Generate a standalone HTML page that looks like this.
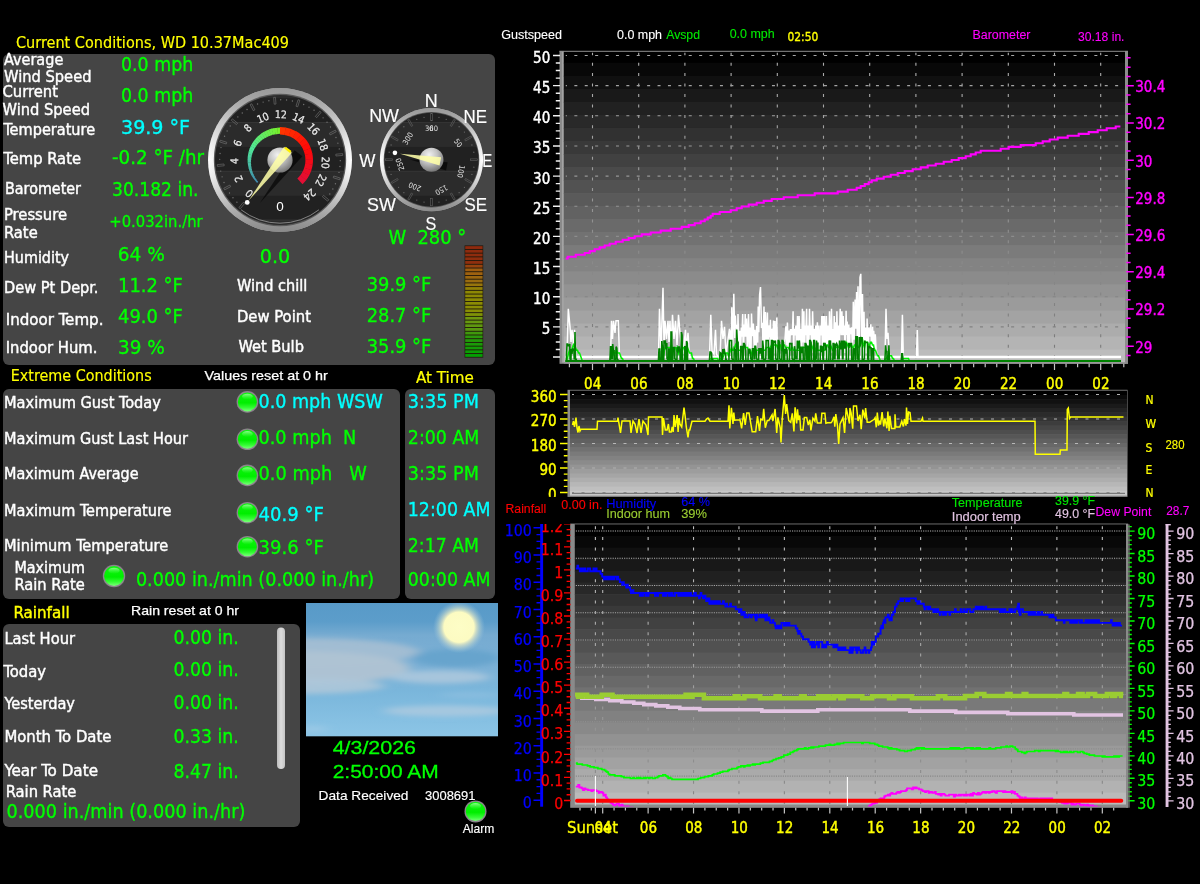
<!DOCTYPE html>
<html lang="en"><head><meta charset="utf-8"><title>Weather Display Live</title>
<style>
html,body{margin:0;padding:0;background:#000;}
body{width:1200px;height:884px;overflow:hidden;position:relative;font-family:"DejaVu Sans Condensed","DejaVu Sans","Liberation Sans",sans-serif;}
#app{position:absolute;left:0;top:0;width:1200px;height:884px;background:#000;}
.panel{position:absolute;background:#454545;border-radius:6px;}
svg{position:absolute;left:0;top:0;will-change:transform;}
.t{font-family:"DejaVu Sans Condensed","DejaVu Sans",sans-serif;}
.a{font-family:"Liberation Sans",sans-serif;}
</style></head><body><div id="app">
<div class="panel" style="left:3px;top:53.6px;width:492px;height:311.6px"></div>
<div class="panel" style="left:3px;top:389px;width:397px;height:209.5px"></div>
<div class="panel" style="left:405px;top:389px;width:90px;height:209.5px"></div>
<div class="panel" style="left:3px;top:624px;width:297px;height:203px"></div>
<svg width="1200" height="884" viewBox="0 0 1200 884">
<defs>
<linearGradient id="ledg" x1="0" y1="0" x2="0" y2="1"><stop offset="0" stop-color="#10f410"/><stop offset="0.55" stop-color="#00ee00"/><stop offset="0.8" stop-color="#34fb34"/><stop offset="1" stop-color="#7cff7c"/></linearGradient>
<linearGradient id="ledh" x1="0" y1="0" x2="0" y2="1"><stop offset="0" stop-color="#a8ffa8" stop-opacity="0.8"/><stop offset="1" stop-color="#50ff50" stop-opacity="0.05"/></linearGradient>
<linearGradient id="sky" x1="0" y1="0" x2="0" y2="1"><stop offset="0" stop-color="#589ac8"/><stop offset="0.14" stop-color="#5c9dca"/><stop offset="0.24" stop-color="#76abd1"/><stop offset="0.5" stop-color="#7cb1d6"/><stop offset="0.66" stop-color="#7ab6db"/><stop offset="0.9" stop-color="#87c1e3"/><stop offset="1" stop-color="#8cc5e6"/></linearGradient>
<radialGradient id="sun" cx="0.5" cy="0.5" r="0.5"><stop offset="0" stop-color="#fdfdc6"/><stop offset="0.58" stop-color="#fcfbc2"/><stop offset="0.68" stop-color="#dfe6c4" stop-opacity="0.8"/><stop offset="1" stop-color="#9cc4dc" stop-opacity="0"/></radialGradient>
<linearGradient id="scr" x1="0" y1="0" x2="1" y2="0"><stop offset="0" stop-color="#bdbdbd"/><stop offset="0.5" stop-color="#dcdcdc"/><stop offset="1" stop-color="#c4c4c4"/></linearGradient>
<filter id="blur3" x="-20%" y="-50%" width="140%" height="200%"><feGaussianBlur stdDeviation="6 2.4"/></filter>
<clipPath id="skyclip"><rect x="306" y="603" width="192" height="133.5"/></clipPath>
</defs>
<g id="leds">
<circle cx="247.4" cy="401.9" r="10.8" fill="#8c848c"/><circle cx="247.4" cy="401.9" r="9.5" fill="url(#ledg)"/><ellipse cx="247.4" cy="396.6" rx="5.4" ry="2.9" fill="url(#ledh)"/>
<circle cx="247.4" cy="439.3" r="10.8" fill="#8c848c"/><circle cx="247.4" cy="439.3" r="9.5" fill="url(#ledg)"/><ellipse cx="247.4" cy="434.0" rx="5.4" ry="2.9" fill="url(#ledh)"/>
<circle cx="247.4" cy="475.4" r="10.8" fill="#8c848c"/><circle cx="247.4" cy="475.4" r="9.5" fill="url(#ledg)"/><ellipse cx="247.4" cy="470.1" rx="5.4" ry="2.9" fill="url(#ledh)"/>
<circle cx="247.4" cy="512.7" r="10.8" fill="#8c848c"/><circle cx="247.4" cy="512.7" r="9.5" fill="url(#ledg)"/><ellipse cx="247.4" cy="507.4" rx="5.4" ry="2.9" fill="url(#ledh)"/>
<circle cx="247.4" cy="546.7" r="10.8" fill="#8c848c"/><circle cx="247.4" cy="546.7" r="9.5" fill="url(#ledg)"/><ellipse cx="247.4" cy="541.4" rx="5.4" ry="2.9" fill="url(#ledh)"/>
<circle cx="114" cy="576" r="11.2" fill="#8c848c"/><circle cx="114" cy="576" r="9.899999999999999" fill="url(#ledg)"/><ellipse cx="114" cy="570.7" rx="5.6" ry="3.0" fill="url(#ledh)"/>
<circle cx="475.5" cy="811.4" r="11" fill="#8c848c"/><circle cx="475.5" cy="811.4" r="9.7" fill="url(#ledg)"/><ellipse cx="475.5" cy="806.1" rx="5.5" ry="3.0" fill="url(#ledh)"/>
</g>
<g id="ledbar"><rect x="464.6" y="245.4" width="18.6" height="112.2" fill="#20180c"/>
<rect x="465.2" y="246.15" width="17.4" height="2.82" fill="#8e2a0e"/>
<rect x="465.2" y="249.87" width="17.4" height="2.82" fill="#8e2b0e"/>
<rect x="465.2" y="253.59" width="17.4" height="2.82" fill="#8e2c0e"/>
<rect x="465.2" y="257.31" width="17.4" height="2.82" fill="#8f2e0e"/>
<rect x="465.2" y="261.03" width="17.4" height="2.82" fill="#8f2f0e"/>
<rect x="465.2" y="264.75" width="17.4" height="2.82" fill="#97430e"/>
<rect x="465.2" y="268.47" width="17.4" height="2.82" fill="#9f5d10"/>
<rect x="465.2" y="272.19" width="17.4" height="2.82" fill="#9e6210"/>
<rect x="465.2" y="275.91" width="17.4" height="2.82" fill="#9c6710"/>
<rect x="465.2" y="279.63" width="17.4" height="2.82" fill="#9a6c10"/>
<rect x="465.2" y="283.35" width="17.4" height="2.82" fill="#97750d"/>
<rect x="465.2" y="287.07" width="17.4" height="2.82" fill="#918007"/>
<rect x="465.2" y="290.79" width="17.4" height="2.82" fill="#8d8804"/>
<rect x="465.2" y="294.51" width="17.4" height="2.82" fill="#8d8904"/>
<rect x="465.2" y="298.23" width="17.4" height="2.82" fill="#8c8b04"/>
<rect x="465.2" y="301.95" width="17.4" height="2.82" fill="#8b8c04"/>
<rect x="465.2" y="305.67" width="17.4" height="2.82" fill="#8a8e04"/>
<rect x="465.2" y="309.39" width="17.4" height="2.82" fill="#8a8f04"/>
<rect x="465.2" y="313.11" width="17.4" height="2.82" fill="#7f9208"/>
<rect x="465.2" y="316.83" width="17.4" height="2.82" fill="#6e970f"/>
<rect x="465.2" y="320.55" width="17.4" height="2.82" fill="#669810"/>
<rect x="465.2" y="324.27" width="17.4" height="2.82" fill="#5f9810"/>
<rect x="465.2" y="327.99" width="17.4" height="2.82" fill="#589810"/>
<rect x="465.2" y="331.71" width="17.4" height="2.82" fill="#3f980d"/>
<rect x="465.2" y="335.43" width="17.4" height="2.82" fill="#2a980b"/>
<rect x="465.2" y="339.15" width="17.4" height="2.82" fill="#22990a"/>
<rect x="465.2" y="342.87" width="17.4" height="2.82" fill="#1a9b08"/>
<rect x="465.2" y="346.59" width="17.4" height="2.82" fill="#139c07"/>
<rect x="465.2" y="350.31" width="17.4" height="2.82" fill="#0b9e05"/>
<rect x="465.2" y="354.03" width="17.4" height="2.82" fill="#04a004"/>
</g>
<rect x="277" y="627.5" width="8" height="141.5" rx="4" fill="url(#scr)"/>
<g id="sky-image" clip-path="url(#skyclip)">
<rect x="306" y="603" width="192.2" height="133.6" fill="url(#sky)"/>
<g filter="url(#blur3)">
<ellipse cx="300" cy="652" rx="120" ry="14" fill="#a3bed3" opacity="0.95"/>
<ellipse cx="295" cy="668" rx="115" ry="17" fill="#aec3d3" opacity="0.98"/>
<ellipse cx="295" cy="686" rx="90" ry="8" fill="#adc6d9" opacity="0.9"/>
<ellipse cx="456" cy="658" rx="44" ry="9" fill="#66a3cc" opacity="0.95"/>
<ellipse cx="440" cy="677" rx="50" ry="6.5" fill="#a9c6dc" opacity="0.95"/>
<ellipse cx="445" cy="711" rx="62" ry="5.5" fill="#a8c8df" opacity="0.95"/>
<ellipse cx="312" cy="729" rx="16" ry="3" fill="#9fcbe6" opacity="0.8"/>
<ellipse cx="470" cy="695" rx="30" ry="3" fill="#8fbfe0" opacity="0.7"/>
</g>
<circle cx="459" cy="627.2" r="26" fill="url(#sun)"/>
</g>
<defs>
<linearGradient id="bezel" x1="0" y1="0" x2="1" y2="0"><stop offset="0" stop-color="#ffffff"/><stop offset="0.12" stop-color="#e2e2e2"/><stop offset="0.5" stop-color="#8e8e8e"/><stop offset="0.88" stop-color="#e2e2e2"/><stop offset="1" stop-color="#ffffff"/></linearGradient>
<linearGradient id="bezel2" x1="0" y1="0" x2="0" y2="1"><stop offset="0" stop-color="#9a9a9a"/><stop offset="0.5" stop-color="#c8c8c8" stop-opacity="0"/><stop offset="1" stop-color="#8a8a8a"/></linearGradient>
<radialGradient id="knob" cx="0.4" cy="0.3" r="0.75"><stop offset="0" stop-color="#f2f2f2"/><stop offset="0.45" stop-color="#c4c4c4"/><stop offset="1" stop-color="#6e6e6e"/></radialGradient>
<pattern id="stripes" x="0" y="98.1" width="10" height="48.8" patternUnits="userSpaceOnUse"><rect width="10" height="24.4" fill="#212121"/><rect y="24.4" width="10" height="24.4" fill="#2b2b2b"/></pattern>
</defs>
<g id="windspeed-gauge">
<circle cx="280" cy="160" r="72" fill="url(#bezel)"/><circle cx="280" cy="160" r="72" fill="url(#bezel2)"/>
<circle cx="280" cy="160" r="66.2" fill="#5a5a5a"/><circle cx="280" cy="160" r="65" fill="url(#stripes)"/>
<rect x="240.85" y="202.18" width="1.8" height="6.8" fill="none" stroke="#707070" stroke-width="0.6" transform="rotate(-140.0 241.75 205.58)"/><circle cx="236.90" cy="202.17" r="0.7" fill="#727272"/><circle cx="232.97" cy="197.74" r="0.7" fill="#727272"/><circle cx="229.50" cy="192.95" r="0.7" fill="#727272"/><rect x="226.32" y="184.07" width="1.8" height="6.8" fill="none" stroke="#707070" stroke-width="0.6" transform="rotate(-117.5 227.22 187.47)"/><circle cx="224.04" cy="182.47" r="0.7" fill="#727272"/><circle cx="222.11" cy="176.87" r="0.7" fill="#727272"/><circle cx="220.73" cy="171.12" r="0.7" fill="#727272"/><rect x="219.83" y="161.79" width="1.8" height="6.8" fill="none" stroke="#707070" stroke-width="0.6" transform="rotate(-95.0 220.73 165.19)"/><circle cx="219.70" cy="159.34" r="0.7" fill="#727272"/><circle cx="220.06" cy="153.44" r="0.7" fill="#727272"/><circle cx="220.99" cy="147.59" r="0.7" fill="#727272"/><rect x="222.35" y="138.71" width="1.8" height="6.8" fill="none" stroke="#707070" stroke-width="0.6" transform="rotate(-72.5 223.25 142.11)"/><circle cx="224.55" cy="136.32" r="0.7" fill="#727272"/><circle cx="227.13" cy="131.00" r="0.7" fill="#727272"/><circle cx="230.23" cy="125.95" r="0.7" fill="#727272"/><rect x="233.52" y="118.35" width="1.8" height="6.8" fill="none" stroke="#707070" stroke-width="0.6" transform="rotate(-50.0 234.42 121.75)"/><circle cx="237.83" cy="116.90" r="0.7" fill="#727272"/><circle cx="242.26" cy="112.97" r="0.7" fill="#727272"/><circle cx="247.05" cy="109.50" r="0.7" fill="#727272"/><rect x="251.63" y="103.82" width="1.8" height="6.8" fill="none" stroke="#707070" stroke-width="0.6" transform="rotate(-27.5 252.53 107.22)"/><circle cx="257.53" cy="104.04" r="0.7" fill="#727272"/><circle cx="263.13" cy="102.11" r="0.7" fill="#727272"/><circle cx="268.88" cy="100.73" r="0.7" fill="#727272"/><rect x="273.91" y="97.33" width="1.8" height="6.8" fill="none" stroke="#707070" stroke-width="0.6" transform="rotate(-5.0 274.81 100.73)"/><circle cx="280.66" cy="99.70" r="0.7" fill="#727272"/><circle cx="286.56" cy="100.06" r="0.7" fill="#727272"/><circle cx="292.41" cy="100.99" r="0.7" fill="#727272"/><rect x="296.99" y="99.85" width="1.8" height="6.8" fill="none" stroke="#707070" stroke-width="0.6" transform="rotate(17.5 297.89 103.25)"/><circle cx="303.68" cy="104.55" r="0.7" fill="#727272"/><circle cx="309.00" cy="107.13" r="0.7" fill="#727272"/><circle cx="314.05" cy="110.23" r="0.7" fill="#727272"/><rect x="317.35" y="111.02" width="1.8" height="6.8" fill="none" stroke="#707070" stroke-width="0.6" transform="rotate(40.0 318.25 114.42)"/><circle cx="323.10" cy="117.83" r="0.7" fill="#727272"/><circle cx="327.03" cy="122.26" r="0.7" fill="#727272"/><circle cx="330.50" cy="127.05" r="0.7" fill="#727272"/><rect x="331.88" y="129.13" width="1.8" height="6.8" fill="none" stroke="#707070" stroke-width="0.6" transform="rotate(62.5 332.78 132.53)"/><circle cx="335.96" cy="137.53" r="0.7" fill="#727272"/><circle cx="337.89" cy="143.13" r="0.7" fill="#727272"/><circle cx="339.27" cy="148.88" r="0.7" fill="#727272"/><rect x="338.37" y="151.41" width="1.8" height="6.8" fill="none" stroke="#707070" stroke-width="0.6" transform="rotate(85.0 339.27 154.81)"/><circle cx="340.30" cy="160.66" r="0.7" fill="#727272"/><circle cx="339.94" cy="166.56" r="0.7" fill="#727272"/><circle cx="339.01" cy="172.41" r="0.7" fill="#727272"/><rect x="335.85" y="174.49" width="1.8" height="6.8" fill="none" stroke="#707070" stroke-width="0.6" transform="rotate(107.5 336.75 177.89)"/><circle cx="335.45" cy="183.68" r="0.7" fill="#727272"/><circle cx="332.87" cy="189.00" r="0.7" fill="#727272"/><circle cx="329.77" cy="194.05" r="0.7" fill="#727272"/><rect x="324.68" y="194.85" width="1.8" height="6.8" fill="none" stroke="#707070" stroke-width="0.6" transform="rotate(130.0 325.58 198.25)"/>
<text class="t" x="251.71" y="190.77" font-size="10.6" fill="#ececec" stroke="#ececec" stroke-width="0.2" text-anchor="middle" transform="rotate(-137.4 251.71 190.77)">0</text><text class="t" x="241.91" y="177.21" font-size="10.6" fill="#ececec" stroke="#ececec" stroke-width="0.2" text-anchor="middle" transform="rotate(-114.3 241.91 177.21)">2</text><text class="t" x="238.21" y="160.90" font-size="10.6" fill="#ececec" stroke="#ececec" stroke-width="0.2" text-anchor="middle" transform="rotate(-91.2 238.21 160.90)">4</text><text class="t" x="241.20" y="144.45" font-size="10.6" fill="#ececec" stroke="#ececec" stroke-width="0.2" text-anchor="middle" transform="rotate(-68.2 241.20 144.45)">6</text><text class="t" x="250.40" y="130.48" font-size="10.6" fill="#ececec" stroke="#ececec" stroke-width="0.2" text-anchor="middle" transform="rotate(-45.1 250.40 130.48)">8</text><text class="t" x="264.34" y="121.24" font-size="10.6" fill="#ececec" stroke="#ececec" stroke-width="0.2" text-anchor="middle" transform="rotate(-22.0 264.34 121.24)">10</text><text class="t" x="280.79" y="118.21" font-size="10.6" fill="#ececec" stroke="#ececec" stroke-width="0.2" text-anchor="middle" transform="rotate(1.1 280.79 118.21)">12</text><text class="t" x="297.11" y="121.86" font-size="10.6" fill="#ececec" stroke="#ececec" stroke-width="0.2" text-anchor="middle" transform="rotate(24.2 297.11 121.86)">14</text><text class="t" x="310.69" y="131.62" font-size="10.6" fill="#ececec" stroke="#ececec" stroke-width="0.2" text-anchor="middle" transform="rotate(47.2 310.69 131.62)">16</text><text class="t" x="319.36" y="145.92" font-size="10.6" fill="#ececec" stroke="#ececec" stroke-width="0.2" text-anchor="middle" transform="rotate(70.3 319.36 145.92)">18</text><text class="t" x="321.73" y="162.48" font-size="10.6" fill="#ececec" stroke="#ececec" stroke-width="0.2" text-anchor="middle" transform="rotate(93.4 321.73 162.48)">20</text><text class="t" x="317.41" y="178.64" font-size="10.6" fill="#ececec" stroke="#ececec" stroke-width="0.2" text-anchor="middle" transform="rotate(116.5 317.41 178.64)">22</text><text class="t" x="307.11" y="191.81" font-size="10.6" fill="#ececec" stroke="#ececec" stroke-width="0.2" text-anchor="middle" transform="rotate(139.6 307.11 191.81)">24</text>
<path d="M257.69,182.31A31.546759259259257,31.546759259259257 0 0 1 255.62,180.02" stroke="#418caf" stroke-width="1.71" fill="none"/><path d="M255.92,180.21A31.440277777777776,31.440277777777776 0 0 1 254.06,177.76" stroke="#4293ad" stroke-width="1.92" fill="none"/><path d="M254.33,177.97A31.333796296296295,31.333796296296295 0 0 1 252.70,175.38" stroke="#439aac" stroke-width="2.13" fill="none"/><path d="M252.96,175.61A31.227314814814815,31.227314814814815 0 0 1 251.56,172.90" stroke="#44a1aa" stroke-width="2.35" fill="none"/><path d="M251.79,173.15A31.120833333333334,31.120833333333334 0 0 1 250.65,170.34" stroke="#45a8a8" stroke-width="2.56" fill="none"/><path d="M250.86,170.61A31.01435185185185,31.01435185185185 0 0 1 249.96,167.71" stroke="#47afa6" stroke-width="2.77" fill="none"/><path d="M250.15,168.00A30.907870370370368,30.907870370370368 0 0 1 249.51,165.05" stroke="#48b6a4" stroke-width="2.98" fill="none"/><path d="M249.67,165.35A30.801388888888887,30.801388888888887 0 0 1 249.29,162.36" stroke="#49bda3" stroke-width="3.20" fill="none"/><path d="M249.42,162.68A30.694907407407406,30.694907407407406 0 0 1 249.31,159.68" stroke="#4ac4a1" stroke-width="3.41" fill="none"/><path d="M249.41,160.00A30.588425925925925,30.588425925925925 0 0 1 249.56,157.02" stroke="#4bcc9f" stroke-width="3.62" fill="none"/><path d="M249.63,157.34A30.481944444444444,30.481944444444444 0 0 1 250.04,154.39" stroke="#4cd39d" stroke-width="3.84" fill="none"/><path d="M250.09,154.73A30.375462962962963,30.375462962962963 0 0 1 250.74,151.83" stroke="#4eda9c" stroke-width="4.05" fill="none"/><path d="M250.76,152.17A30.26898148148148,30.26898148148148 0 0 1 251.67,149.35" stroke="#4fe19a" stroke-width="4.26" fill="none"/><path d="M251.66,149.68A30.162499999999998,30.162499999999998 0 0 1 252.80,146.97" stroke="#50e898" stroke-width="4.47" fill="none"/><path d="M252.76,147.30A30.056018518518517,30.056018518518517 0 0 1 254.13,144.70" stroke="#53e990" stroke-width="4.69" fill="none"/><path d="M254.06,145.03A29.949537037037036,29.949537037037036 0 0 1 255.65,142.57" stroke="#56e987" stroke-width="4.90" fill="none"/><path d="M255.55,142.88A29.843055555555555,29.843055555555555 0 0 1 257.34,140.58" stroke="#59ea7f" stroke-width="5.11" fill="none"/><path d="M257.22,140.89A29.736574074074074,29.736574074074074 0 0 1 259.19,138.75" stroke="#5cea77" stroke-width="5.33" fill="none"/><path d="M259.05,139.05A29.63009259259259,29.63009259259259 0 0 1 261.19,137.10" stroke="#5feb6f" stroke-width="5.54" fill="none"/><path d="M261.02,137.38A29.52361111111111,29.52361111111111 0 0 1 263.32,135.64" stroke="#62ec66" stroke-width="5.75" fill="none"/><path d="M263.13,135.90A29.417129629629628,29.417129629629628 0 0 1 265.56,134.37" stroke="#65ec5e" stroke-width="5.97" fill="none"/><path d="M265.34,134.62A29.310648148148147,29.310648148148147 0 0 1 267.89,133.31" stroke="#68ed56" stroke-width="6.18" fill="none"/><path d="M267.62,133.45A29.299999999999997,29.299999999999997 0 0 1 270.27,132.36" stroke="#6bed4d" stroke-width="6.20" fill="none"/><path d="M269.98,132.47A29.299999999999997,29.299999999999997 0 0 1 272.71,131.62" stroke="#6eee45" stroke-width="6.20" fill="none"/><path d="M272.42,131.70A29.299999999999997,29.299999999999997 0 0 1 275.21,131.09" stroke="#71ef3d" stroke-width="6.20" fill="none"/><path d="M274.91,131.15A29.299999999999997,29.299999999999997 0 0 1 277.75,130.79" stroke="#74ef34" stroke-width="6.20" fill="none"/><path d="M277.45,130.81A29.299999999999997,29.299999999999997 0 0 1 280.31,130.70" stroke="#77f02c" stroke-width="6.20" fill="none"/>
<path d="M280.00,130.80A29.2,29.2 0 0 1 285.26,131.28" stroke="#ff3501" stroke-width="7.6" fill="none"/><path d="M284.96,131.22A29.2,29.2 0 0 1 290.07,132.59" stroke="#ff2e02" stroke-width="7.6" fill="none"/><path d="M289.78,132.49A29.2,29.2 0 0 1 294.58,134.70" stroke="#ff2703" stroke-width="7.6" fill="none"/><path d="M294.32,134.55A29.2,29.2 0 0 1 298.67,137.55" stroke="#ff2004" stroke-width="7.6" fill="none"/><path d="M298.43,137.35A29.2,29.2 0 0 1 302.21,141.05" stroke="#ff1905" stroke-width="7.6" fill="none"/><path d="M302.01,140.82A29.2,29.2 0 0 1 305.11,145.10" stroke="#ff1206" stroke-width="7.6" fill="none"/><path d="M304.95,144.84A29.2,29.2 0 0 1 307.28,149.58" stroke="#ff0b07" stroke-width="7.6" fill="none"/><path d="M307.17,149.30A29.2,29.2 0 0 1 308.65,154.37" stroke="#fd090b" stroke-width="7.6" fill="none"/><path d="M308.59,154.07A29.2,29.2 0 0 1 309.19,159.32" stroke="#f80a12" stroke-width="7.6" fill="none"/><path d="M309.18,159.02A29.2,29.2 0 0 1 308.88,164.29" stroke="#f40b19" stroke-width="7.6" fill="none"/><path d="M308.93,163.99A29.2,29.2 0 0 1 307.73,169.14" stroke="#f00c20" stroke-width="7.6" fill="none"/><path d="M307.83,168.85A29.2,29.2 0 0 1 305.78,173.72" stroke="#eb0d27" stroke-width="7.6" fill="none"/><path d="M305.92,173.45A29.2,29.2 0 0 1 303.07,177.90" stroke="#e70e2e" stroke-width="7.6" fill="none"/><path d="M303.25,177.66A29.2,29.2 0 0 1 299.91,181.36" stroke="#e20f35" stroke-width="7.6" fill="none"/>
<path d="M318.91,209.80A63.2,63.2 0 0 1 241.09,209.80" stroke="#8c8c8c" stroke-width="0.9" fill="none"/>
<polygon points="302.41,156.27 259.92,203.06 294.49,150.16" fill="#000" opacity="0.62"/>
<circle cx="280" cy="160" r="12.6" fill="url(#knob)"/>
<polygon points="291.91,152.77 248.51,200.75 283.99,146.66" fill="#ffffa8" opacity="0.86"/>
<rect x="284.35" y="148.61" width="7.2" height="2.4" fill="#fff000" transform="rotate(37.7 287.95 149.71)"/>
<circle cx="247.22" cy="202.41" r="2.4" fill="#fff"/>
<text class="a" x="280" y="211.2" font-size="13.5" fill="#fff" text-anchor="middle">0</text>
</g>
<g id="compass">
<circle cx="431.5" cy="159.7" r="51.6" fill="url(#bezel)"/><circle cx="431.5" cy="159.7" r="51.6" fill="url(#bezel2)"/>
<circle cx="431.5" cy="159.7" r="47.8" fill="#555"/><circle cx="431.5" cy="159.7" r="47" fill="url(#stripes)"/>
<rect x="430.70" y="113.60" width="1.6" height="7.2" fill="none" stroke="#606060" stroke-width="0.6" transform="rotate(0 431.50 117.20)"/><circle cx="438.97" cy="117.35" r="0.65" fill="#6a6a6a"/><circle cx="446.21" cy="119.29" r="0.65" fill="#6a6a6a"/><rect x="451.95" y="119.29" width="1.6" height="7.2" fill="none" stroke="#606060" stroke-width="0.6" transform="rotate(30 452.75 122.89)"/><circle cx="459.14" cy="126.76" r="0.65" fill="#6a6a6a"/><circle cx="464.44" cy="132.06" r="0.65" fill="#6a6a6a"/><rect x="467.51" y="134.85" width="1.6" height="7.2" fill="none" stroke="#606060" stroke-width="0.6" transform="rotate(60 468.31 138.45)"/><circle cx="471.91" cy="144.99" r="0.65" fill="#6a6a6a"/><circle cx="473.85" cy="152.23" r="0.65" fill="#6a6a6a"/><rect x="473.20" y="156.10" width="1.6" height="7.2" fill="none" stroke="#606060" stroke-width="0.6" transform="rotate(90 474.00 159.70)"/><circle cx="473.85" cy="167.17" r="0.65" fill="#6a6a6a"/><circle cx="471.91" cy="174.41" r="0.65" fill="#6a6a6a"/><rect x="467.51" y="177.35" width="1.6" height="7.2" fill="none" stroke="#606060" stroke-width="0.6" transform="rotate(120 468.31 180.95)"/><circle cx="464.44" cy="187.34" r="0.65" fill="#6a6a6a"/><circle cx="459.14" cy="192.64" r="0.65" fill="#6a6a6a"/><rect x="451.95" y="192.91" width="1.6" height="7.2" fill="none" stroke="#606060" stroke-width="0.6" transform="rotate(150 452.75 196.51)"/><circle cx="446.21" cy="200.11" r="0.65" fill="#6a6a6a"/><circle cx="438.97" cy="202.05" r="0.65" fill="#6a6a6a"/><rect x="430.70" y="198.60" width="1.6" height="7.2" fill="none" stroke="#606060" stroke-width="0.6" transform="rotate(180 431.50 202.20)"/><circle cx="424.03" cy="202.05" r="0.65" fill="#6a6a6a"/><circle cx="416.79" cy="200.11" r="0.65" fill="#6a6a6a"/><rect x="409.45" y="192.91" width="1.6" height="7.2" fill="none" stroke="#606060" stroke-width="0.6" transform="rotate(210 410.25 196.51)"/><circle cx="403.86" cy="192.64" r="0.65" fill="#6a6a6a"/><circle cx="398.56" cy="187.34" r="0.65" fill="#6a6a6a"/><rect x="393.89" y="177.35" width="1.6" height="7.2" fill="none" stroke="#606060" stroke-width="0.6" transform="rotate(240 394.69 180.95)"/><circle cx="391.09" cy="174.41" r="0.65" fill="#6a6a6a"/><circle cx="389.15" cy="167.17" r="0.65" fill="#6a6a6a"/><rect x="388.20" y="156.10" width="1.6" height="7.2" fill="none" stroke="#606060" stroke-width="0.6" transform="rotate(270 389.00 159.70)"/><circle cx="389.15" cy="152.23" r="0.65" fill="#6a6a6a"/><circle cx="391.09" cy="144.99" r="0.65" fill="#6a6a6a"/><rect x="393.89" y="134.85" width="1.6" height="7.2" fill="none" stroke="#606060" stroke-width="0.6" transform="rotate(300 394.69 138.45)"/><circle cx="398.56" cy="132.06" r="0.65" fill="#6a6a6a"/><circle cx="403.86" cy="126.76" r="0.65" fill="#6a6a6a"/><rect x="409.45" y="119.29" width="1.6" height="7.2" fill="none" stroke="#606060" stroke-width="0.6" transform="rotate(330 410.25 122.89)"/><circle cx="416.79" cy="119.29" r="0.65" fill="#6a6a6a"/><circle cx="424.03" cy="117.35" r="0.65" fill="#6a6a6a"/>
<text class="t" x="431.50" y="131.10" font-size="7.5" fill="#e0e0e0" text-anchor="middle" transform="rotate(0 431.50 131.10)">0</text><text class="t" x="431.50" y="131.10" font-size="7.5" fill="#e0e0e0" text-anchor="middle" transform="rotate(0 431.50 131.10)">360</text><text class="t" x="453.41" y="141.32" font-size="7.5" fill="#e0e0e0" text-anchor="start" transform="rotate(51 453.41 141.32)">50</text><text class="t" x="459.67" y="164.67" font-size="7.5" fill="#e0e0e0" text-anchor="start" transform="rotate(101 459.67 164.67)">100</text><text class="t" x="445.80" y="184.47" font-size="7.5" fill="#e0e0e0" text-anchor="start" transform="rotate(151 445.80 184.47)">150</text><text class="t" x="421.72" y="186.58" font-size="7.5" fill="#e0e0e0" text-anchor="start" transform="rotate(201 421.72 186.58)">200</text><text class="t" x="404.62" y="169.48" font-size="7.5" fill="#e0e0e0" text-anchor="start" transform="rotate(251 404.62 169.48)">250</text><text class="t" x="406.73" y="145.40" font-size="7.5" fill="#e0e0e0" text-anchor="start" transform="rotate(301 406.73 145.40)">300</text>
<polygon points="446.07,170.58 408.99,159.37 447.61,162.32" fill="#000" opacity="0.62"/>
<circle cx="431.5" cy="159.7" r="12" fill="url(#knob)"/>
<polygon points="439.57,165.48 400.05,153.81 441.12,157.23" fill="#ffffa8" opacity="0.88"/>
<circle cx="394.93" cy="152.86" r="2.3" fill="#fff"/>
</g>
<defs>
<linearGradient id="gridv1" gradientUnits="userSpaceOnUse" x1="0" y1="52" x2="0" y2="362"><stop offset="0" stop-color="#b0b0b0"/><stop offset="1" stop-color="#787878"/></linearGradient>
<linearGradient id="gridv3" gradientUnits="userSpaceOnUse" x1="0" y1="524" x2="0" y2="804"><stop offset="0" stop-color="#c0c0c0"/><stop offset="1" stop-color="#848484"/></linearGradient>
</defs>
<g id="chart-wind-baro">
<rect x="559.5" y="50.8" width="568.5" height="313" fill="#8a8a8a"/><rect x="562" y="51.6" width="2" height="311" fill="#a4a4a4"/>
<rect x="563.75" y="49.80" width="561.25" height="13.53" fill="#000000"/><rect x="563.75" y="62.83" width="561.25" height="13.53" fill="#080808"/><rect x="563.75" y="75.86" width="561.25" height="13.53" fill="#101010"/><rect x="563.75" y="88.89" width="561.25" height="13.53" fill="#191919"/><rect x="563.75" y="101.92" width="561.25" height="13.53" fill="#212121"/><rect x="563.75" y="114.95" width="561.25" height="13.53" fill="#292929"/><rect x="563.75" y="127.97" width="561.25" height="13.53" fill="#313131"/><rect x="563.75" y="141.00" width="561.25" height="13.53" fill="#393939"/><rect x="563.75" y="154.03" width="561.25" height="13.53" fill="#414141"/><rect x="563.75" y="167.06" width="561.25" height="13.53" fill="#4a4a4a"/><rect x="563.75" y="180.09" width="561.25" height="13.53" fill="#525252"/><rect x="563.75" y="193.12" width="561.25" height="13.53" fill="#5a5a5a"/><rect x="563.75" y="206.15" width="561.25" height="13.53" fill="#626262"/><rect x="563.75" y="219.18" width="561.25" height="13.53" fill="#6a6a6a"/><rect x="563.75" y="232.21" width="561.25" height="13.53" fill="#727272"/><rect x="563.75" y="245.24" width="561.25" height="13.53" fill="#7b7b7b"/><rect x="563.75" y="258.27" width="561.25" height="13.53" fill="#838383"/><rect x="563.75" y="271.30" width="561.25" height="13.53" fill="#8b8b8b"/><rect x="563.75" y="284.32" width="561.25" height="13.53" fill="#939393"/><rect x="563.75" y="297.35" width="561.25" height="13.53" fill="#9b9b9b"/><rect x="563.75" y="310.38" width="561.25" height="13.53" fill="#a3a3a3"/><rect x="563.75" y="323.41" width="561.25" height="13.53" fill="#acacac"/><rect x="563.75" y="336.44" width="561.25" height="13.53" fill="#b4b4b4"/><rect x="563.75" y="349.47" width="561.25" height="13.53" fill="#bcbcbc"/>
<rect x="559.5" y="49" width="570" height="1.8" fill="#000"/><rect x="559.5" y="50.8" width="568.5" height="1" fill="#8f8f8f"/>
<rect x="1125" y="51.8" width="3" height="312" fill="#8c8c8c"/><rect x="563.75" y="362.2" width="562" height="1.6" fill="#909090"/>
<path d="M592.50,52.8V362.5M638.70,52.8V362.5M684.90,52.8V362.5M731.10,52.8V362.5M777.30,52.8V362.5M823.50,52.8V362.5M869.70,52.8V362.5M915.90,52.8V362.5M962.10,52.8V362.5M1008.30,52.8V362.5M1054.50,52.8V362.5M1100.70,52.8V362.5" stroke="url(#gridv1)" stroke-width="1.1" stroke-dasharray="3 7.45" stroke-dashoffset="0.6" fill="none"/>
<path d="M565.75,326.85H1125" stroke="#818181" stroke-width="1.1" stroke-dasharray="3 7.4" stroke-dashoffset="1.8" fill="none"/><path d="M565.75,296.70H1125" stroke="#858585" stroke-width="1.1" stroke-dasharray="3 7.4" stroke-dashoffset="1.8" fill="none"/><path d="M565.75,266.55H1125" stroke="#898989" stroke-width="1.1" stroke-dasharray="3 7.4" stroke-dashoffset="1.8" fill="none"/><path d="M565.75,236.40H1125" stroke="#8d8d8d" stroke-width="1.1" stroke-dasharray="3 7.4" stroke-dashoffset="1.8" fill="none"/><path d="M565.75,206.25H1125" stroke="#929292" stroke-width="1.1" stroke-dasharray="3 7.4" stroke-dashoffset="1.8" fill="none"/><path d="M565.75,176.10H1125" stroke="#969696" stroke-width="1.1" stroke-dasharray="3 7.4" stroke-dashoffset="1.8" fill="none"/><path d="M565.75,145.95H1125" stroke="#9a9a9a" stroke-width="1.1" stroke-dasharray="3 7.4" stroke-dashoffset="1.8" fill="none"/><path d="M565.75,115.80H1125" stroke="#9e9e9e" stroke-width="1.1" stroke-dasharray="3 7.4" stroke-dashoffset="1.8" fill="none"/><path d="M565.75,85.65H1125" stroke="#a3a3a3" stroke-width="1.1" stroke-dasharray="3 7.4" stroke-dashoffset="1.8" fill="none"/><path d="M565.75,55.50H1125" stroke="#a7a7a7" stroke-width="1.1" stroke-dasharray="3 7.4" stroke-dashoffset="1.8" fill="none"/>
<path d="M553,357.00H560M555.8,349.46H560M555.8,341.93H560M555.8,334.39H560M553,326.85H560M555.8,319.31H560M555.8,311.77H560M555.8,304.24H560M553,296.70H560M555.8,289.16H560M555.8,281.62H560M555.8,274.09H560M553,266.55H560M555.8,259.01H560M555.8,251.47H560M555.8,243.94H560M553,236.40H560M555.8,228.86H560M555.8,221.32H560M555.8,213.79H560M553,206.25H560M555.8,198.71H560M555.8,191.17H560M555.8,183.64H560M553,176.10H560M555.8,168.56H560M555.8,161.03H560M555.8,153.49H560M553,145.95H560M555.8,138.41H560M555.8,130.88H560M555.8,123.34H560M553,115.80H560M555.8,108.26H560M555.8,100.72H560M555.8,93.19H560M553,85.65H560M555.8,78.11H560M555.8,70.57H560M555.8,63.04H560M553,55.50H560" stroke="#f0f0f0" stroke-width="1.4" fill="none"/>
<text class="t" x="550.3" y="334.2" font-size="15.8" fill="#fff" stroke="#fff" stroke-width="0.42" text-anchor="end" textLength="8.6" lengthAdjust="spacingAndGlyphs">5</text>
<text class="t" x="550.3" y="304.1" font-size="15.8" fill="#fff" stroke="#fff" stroke-width="0.42" text-anchor="end" textLength="17.2" lengthAdjust="spacingAndGlyphs">10</text>
<text class="t" x="550.3" y="273.9" font-size="15.8" fill="#fff" stroke="#fff" stroke-width="0.42" text-anchor="end" textLength="17.2" lengthAdjust="spacingAndGlyphs">15</text>
<text class="t" x="550.3" y="243.8" font-size="15.8" fill="#fff" stroke="#fff" stroke-width="0.42" text-anchor="end" textLength="17.2" lengthAdjust="spacingAndGlyphs">20</text>
<text class="t" x="550.3" y="213.7" font-size="15.8" fill="#fff" stroke="#fff" stroke-width="0.42" text-anchor="end" textLength="17.2" lengthAdjust="spacingAndGlyphs">25</text>
<text class="t" x="550.3" y="183.5" font-size="15.8" fill="#fff" stroke="#fff" stroke-width="0.42" text-anchor="end" textLength="17.2" lengthAdjust="spacingAndGlyphs">30</text>
<text class="t" x="550.3" y="153.3" font-size="15.8" fill="#fff" stroke="#fff" stroke-width="0.42" text-anchor="end" textLength="17.2" lengthAdjust="spacingAndGlyphs">35</text>
<text class="t" x="550.3" y="123.2" font-size="15.8" fill="#fff" stroke="#fff" stroke-width="0.42" text-anchor="end" textLength="17.2" lengthAdjust="spacingAndGlyphs">40</text>
<text class="t" x="550.3" y="93.0" font-size="15.8" fill="#fff" stroke="#fff" stroke-width="0.42" text-anchor="end" textLength="17.2" lengthAdjust="spacingAndGlyphs">45</text>
<text class="t" x="550.3" y="62.9" font-size="15.8" fill="#fff" stroke="#fff" stroke-width="0.42" text-anchor="end" textLength="17.2" lengthAdjust="spacingAndGlyphs">50</text>
<path d="M1126.3,355.55H1130.6M1126.3,346.25H1133.8M1126.3,336.95H1130.6M1126.3,327.64H1130.6M1126.3,318.34H1130.6M1126.3,309.04H1133.8M1126.3,299.73H1130.6M1126.3,290.43H1130.6M1126.3,281.13H1130.6M1126.3,271.82H1133.8M1126.3,262.52H1130.6M1126.3,253.22H1130.6M1126.3,243.91H1130.6M1126.3,234.61H1133.8M1126.3,225.30H1130.6M1126.3,216.00H1130.6M1126.3,206.70H1130.6M1126.3,197.39H1133.8M1126.3,188.09H1130.6M1126.3,178.79H1130.6M1126.3,169.48H1130.6M1126.3,160.18H1133.8M1126.3,150.88H1130.6M1126.3,141.57H1130.6M1126.3,132.27H1130.6M1126.3,122.97H1133.8M1126.3,113.66H1130.6M1126.3,104.36H1130.6M1126.3,95.06H1130.6M1126.3,85.75H1133.8M1126.3,76.45H1130.6M1126.3,67.14H1130.6M1126.3,57.84H1130.6" stroke="#ff00ff" stroke-width="1.5" fill="none"/>
<text class="t" x="1135.2" y="352.6" font-size="15.8" fill="#ff00ff" stroke="#ff00ff" stroke-width="0.42" text-anchor="start" textLength="17.2" lengthAdjust="spacingAndGlyphs">29</text>
<text class="t" x="1135.2" y="315.4" font-size="15.8" fill="#ff00ff" stroke="#ff00ff" stroke-width="0.42" text-anchor="start" textLength="30.1" lengthAdjust="spacingAndGlyphs">29.2</text>
<text class="t" x="1135.2" y="278.2" font-size="15.8" fill="#ff00ff" stroke="#ff00ff" stroke-width="0.42" text-anchor="start" textLength="30.1" lengthAdjust="spacingAndGlyphs">29.4</text>
<text class="t" x="1135.2" y="241.0" font-size="15.8" fill="#ff00ff" stroke="#ff00ff" stroke-width="0.42" text-anchor="start" textLength="30.1" lengthAdjust="spacingAndGlyphs">29.6</text>
<text class="t" x="1135.2" y="203.8" font-size="15.8" fill="#ff00ff" stroke="#ff00ff" stroke-width="0.42" text-anchor="start" textLength="30.1" lengthAdjust="spacingAndGlyphs">29.8</text>
<text class="t" x="1135.2" y="166.6" font-size="15.8" fill="#ff00ff" stroke="#ff00ff" stroke-width="0.42" text-anchor="start" textLength="17.2" lengthAdjust="spacingAndGlyphs">30</text>
<text class="t" x="1135.2" y="129.4" font-size="15.8" fill="#ff00ff" stroke="#ff00ff" stroke-width="0.42" text-anchor="start" textLength="30.1" lengthAdjust="spacingAndGlyphs">30.2</text>
<text class="t" x="1135.2" y="92.2" font-size="15.8" fill="#ff00ff" stroke="#ff00ff" stroke-width="0.42" text-anchor="start" textLength="30.1" lengthAdjust="spacingAndGlyphs">30.4</text>
<path d="M569.40,363.8V367.2M580.95,363.8V367.2M592.50,363.8V370M604.05,363.8V367.2M615.60,363.8V367.2M627.15,363.8V367.2M638.70,363.8V370M650.25,363.8V367.2M661.80,363.8V367.2M673.35,363.8V367.2M684.90,363.8V370M696.45,363.8V367.2M708.00,363.8V367.2M719.55,363.8V367.2M731.10,363.8V370M742.65,363.8V367.2M754.20,363.8V367.2M765.75,363.8V367.2M777.30,363.8V370M788.85,363.8V367.2M800.40,363.8V367.2M811.95,363.8V367.2M823.50,363.8V370M835.05,363.8V367.2M846.60,363.8V367.2M858.15,363.8V367.2M869.70,363.8V370M881.25,363.8V367.2M892.80,363.8V367.2M904.35,363.8V367.2M915.90,363.8V370M927.45,363.8V367.2M939.00,363.8V367.2M950.55,363.8V367.2M962.10,363.8V370M973.65,363.8V367.2M985.20,363.8V367.2M996.75,363.8V367.2M1008.30,363.8V370M1019.85,363.8V367.2M1031.40,363.8V367.2M1042.95,363.8V367.2M1054.50,363.8V370M1066.05,363.8V367.2M1077.60,363.8V367.2M1089.15,363.8V367.2M1100.70,363.8V370M1112.25,363.8V367.2M1123.80,363.8V367.2" stroke="#c4c4c4" stroke-width="1.2" fill="none"/>
<text class="t" x="592.7" y="388.8" font-size="15.8" fill="#ffff00" stroke="#ffff00" stroke-width="0.42" text-anchor="middle" textLength="17.2" lengthAdjust="spacingAndGlyphs">04</text>
<text class="t" x="638.9" y="388.8" font-size="15.8" fill="#ffff00" stroke="#ffff00" stroke-width="0.42" text-anchor="middle" textLength="17.2" lengthAdjust="spacingAndGlyphs">06</text>
<text class="t" x="685.1" y="388.8" font-size="15.8" fill="#ffff00" stroke="#ffff00" stroke-width="0.42" text-anchor="middle" textLength="17.2" lengthAdjust="spacingAndGlyphs">08</text>
<text class="t" x="731.3" y="388.8" font-size="15.8" fill="#ffff00" stroke="#ffff00" stroke-width="0.42" text-anchor="middle" textLength="17.2" lengthAdjust="spacingAndGlyphs">10</text>
<text class="t" x="777.5" y="388.8" font-size="15.8" fill="#ffff00" stroke="#ffff00" stroke-width="0.42" text-anchor="middle" textLength="17.2" lengthAdjust="spacingAndGlyphs">12</text>
<text class="t" x="823.7" y="388.8" font-size="15.8" fill="#ffff00" stroke="#ffff00" stroke-width="0.42" text-anchor="middle" textLength="17.2" lengthAdjust="spacingAndGlyphs">14</text>
<text class="t" x="869.9" y="388.8" font-size="15.8" fill="#ffff00" stroke="#ffff00" stroke-width="0.42" text-anchor="middle" textLength="17.2" lengthAdjust="spacingAndGlyphs">16</text>
<text class="t" x="916.1" y="388.8" font-size="15.8" fill="#ffff00" stroke="#ffff00" stroke-width="0.42" text-anchor="middle" textLength="17.2" lengthAdjust="spacingAndGlyphs">18</text>
<text class="t" x="962.3" y="388.8" font-size="15.8" fill="#ffff00" stroke="#ffff00" stroke-width="0.42" text-anchor="middle" textLength="17.2" lengthAdjust="spacingAndGlyphs">20</text>
<text class="t" x="1008.5" y="388.8" font-size="15.8" fill="#ffff00" stroke="#ffff00" stroke-width="0.42" text-anchor="middle" textLength="17.2" lengthAdjust="spacingAndGlyphs">22</text>
<text class="t" x="1054.7" y="388.8" font-size="15.8" fill="#ffff00" stroke="#ffff00" stroke-width="0.42" text-anchor="middle" textLength="17.2" lengthAdjust="spacingAndGlyphs">00</text>
<text class="t" x="1100.9" y="388.8" font-size="15.8" fill="#ffff00" stroke="#ffff00" stroke-width="0.42" text-anchor="middle" textLength="17.2" lengthAdjust="spacingAndGlyphs">02</text>
<clipPath id="c1clip"><rect x="564" y="52" width="561" height="310.2"/></clipPath><g clip-path="url(#c1clip)">
<polyline points="565.5,357.0 567.0,357.0 568.3,308.8 570.0,326.9 571.0,341.9 572.0,329.9 573.5,344.9 574.5,329.9 576.0,357.0 610.5,357.0 611.5,320.8 612.5,338.9 613.5,320.8 615.0,332.9 616.0,320.8 618.3,320.8 619.5,357.0 658.5,357.0 659.5,308.8 661.0,351.0 663.0,287.7 664.0,344.9 665.0,320.8 666.5,338.9 668.0,320.8 669.0,341.9 670.0,320.8 671.0,351.0 672.5,314.8 674.0,338.9 675.5,320.8 677.0,344.9 678.5,314.8 680.0,332.9 681.5,344.9 683.0,354.0 685.5,329.9 686.5,351.0 688.0,332.9 689.5,357.0 709.5,357.0 710.8,314.8 712.0,351.0 714.0,354.0 715.5,329.9 716.5,354.0 718.0,357.0 720.0,357.0 721.5,320.8 723.0,338.9 724.5,326.9 726.0,354.0 729.5,328.9 730.2,344.1 730.8,330.3 731.3,349.6 731.8,307.3 732.5,357.0 733.8,293.7 734.8,337.9 735.3,315.6 735.9,328.2 736.9,324.8 737.4,353.0 738.0,314.0 739.0,357.0 739.7,330.8 740.4,350.2 741.4,327.6 741.9,336.6 742.7,314.0 743.4,357.0 744.1,324.4 744.7,336.6 745.2,314.0 745.8,336.6 746.5,318.6 747.5,350.2 748.5,314.0 749.5,350.2 750.3,327.5 751.0,353.4 751.5,313.5 752.3,336.3 753.3,323.5 754.3,350.0 754.9,329.7 755.9,353.2 756.7,326.0 757.7,342.6 758.2,306.6 758.8,332.2 759.6,294.9 760.5,287.1 760.5,287.1 761.5,328.0 762.5,322.8 763.0,348.6 764.0,306.6 764.6,357.0 765.4,311.9 766.4,350.3 767.4,312.4 768.2,357.0 769.2,325.3 769.9,337.3 770.4,319.8 771.0,353.5 771.8,328.8 772.5,344.0 773.5,320.5 774.0,353.6 775.0,320.9 775.8,353.6 776.8,317.4 777.6,357.0 778.4,352.2 779.1,357.0 779.7,355.2 780.4,357.0 780.9,355.2 781.7,357.0 782.3,352.2 783.1,357.0 783.9,355.2 784.9,340.4 785.9,326.2 786.9,345.3 787.4,322.5 788.4,357.0 789.1,330.5 789.8,342.7 790.5,329.0 791.3,335.3 791.9,329.0 792.4,335.3 793.1,311.2 793.7,349.8 794.2,329.0 794.9,335.3 795.9,325.6 796.7,349.8 797.5,316.0 798.1,357.0 799.1,316.0 800.1,342.5 800.9,329.0 801.6,357.0 802.4,308.8 803.2,342.5 803.9,311.2 804.4,353.1 805.2,325.6 805.8,335.3 806.6,308.8 807.1,349.8 807.9,325.6 808.7,353.1 809.5,308.8 810.2,335.3 810.9,325.6 811.9,353.1 812.6,311.2 813.6,349.8 814.2,329.0 815.0,342.5 815.8,325.6 816.6,342.5 817.4,322.3 817.9,353.1 818.5,325.6 819.5,353.1 820.3,325.6 821.3,335.3 821.8,316.0 822.6,357.0 823.2,316.0 823.9,342.5 824.6,316.0 825.4,357.0 826.4,316.0 827.4,357.0 828.1,325.6 828.8,357.0 829.5,311.2 830.5,353.1 831.5,308.8 832.3,353.1 833.0,329.0 833.5,357.0 834.2,316.0 834.9,353.1 835.5,322.3 836.2,349.8 836.9,311.2 837.7,349.8 838.7,325.6 839.2,349.8 840.2,308.8 841.2,335.3 841.9,311.2 842.6,335.3 843.2,316.0 843.9,335.3 844.4,325.6 845.1,353.1 846.1,310.7 846.7,335.0 847.2,321.6 848.2,357.0 848.8,324.6 849.5,349.5 850.0,327.8 851.0,334.1 851.6,327.4 852.6,349.0 853.3,301.8 854.1,339.7 855.1,299.4 855.8,328.8 856.6,291.9 857.3,336.7 858.0,286.2 859.0,357.0 860.0,277.3 860.8,273.8 860.8,273.8 860.8,273.8 860.8,273.8 861.8,357.0 862.5,294.0 863.3,357.0 864.0,311.8 864.8,353.4 865.6,327.6 866.6,353.4 867.1,318.6 868.1,353.4 868.8,327.6 869.8,336.6 870.8,324.4 871.8,353.4 872.6,326.8 873.2,351.1 873.7,330.8 874.7,347.6 875.3,334.4 876.1,349.4 877.5,357.0 885.0,357.0 886.0,308.8 887.0,338.9 888.0,332.9 889.0,351.0 890.0,357.0 901.5,357.0 902.4,314.8 903.3,357.0 916.5,357.0 917.3,329.9 918.0,357.0 1120.0,357.0" fill="none" stroke="#ffffff" stroke-width="1.5" stroke-linejoin="miter"/>
<path d="M565.5,357.1H1121" stroke="#fff" stroke-width="2.5"/>
<polyline points="565.5,361.2 566.5,361.2 567.5,358.5 568.5,353.1 569.5,350.3 570.5,350.3 571.5,350.3 572.5,347.6 573.5,344.9 574.5,347.6 575.5,347.6 576.5,350.3 577.5,350.3 578.5,353.1 579.5,353.1 580.5,355.8 581.5,358.5 582.5,361.2 583.5,361.2 584.5,361.2 585.5,361.2 586.5,361.2 587.5,361.2 588.5,361.2 589.5,361.2 590.5,361.2 591.5,361.2 592.5,361.2 593.5,361.2 594.5,361.2 595.5,361.2 596.5,361.2 597.5,361.2 598.5,361.2 599.5,361.2 600.5,361.2 601.5,361.2 602.5,361.2 603.5,361.2 604.5,361.2 605.5,361.2 606.5,361.2 607.5,361.2 608.5,361.2 609.5,361.2 610.5,358.5 611.5,358.5 612.5,355.8 613.5,353.1 614.5,353.1 615.5,353.1 616.5,350.3 617.5,353.1 618.5,353.1 619.5,353.1 620.5,355.8 621.5,358.5 622.5,358.5 623.5,361.2 624.5,361.2 625.5,361.2 626.5,361.2 627.5,361.2 628.5,361.2 629.5,361.2 630.5,361.2 631.5,361.2 632.5,361.2 633.5,361.2 634.5,361.2 635.5,361.2 636.5,361.2 637.5,361.2 638.5,361.2 639.5,361.2 640.5,361.2 641.5,361.2 642.5,361.2 643.5,361.2 644.5,361.2 645.5,361.2 646.5,361.2 647.5,361.2 648.5,361.2 649.5,361.2 650.5,361.2 651.5,361.2 652.5,361.2 653.5,361.2 654.5,361.2 655.5,361.2 656.5,361.2 657.5,361.2 658.5,361.2 659.5,358.5 660.5,358.5 661.5,358.5 662.5,355.8 663.5,355.8 664.5,350.3 665.5,347.6 666.5,347.6 667.5,347.6 668.5,347.6 669.5,347.6 670.5,347.6 671.5,344.9 672.5,350.3 673.5,350.3 674.5,347.6 675.5,347.6 676.5,350.3 677.5,347.6 678.5,353.1 679.5,350.3 680.5,350.3 681.5,350.3 682.5,347.6 683.5,347.6 684.5,350.3 685.5,347.6 686.5,350.3 687.5,347.6 688.5,350.3 689.5,353.1 690.5,353.1 691.5,353.1 692.5,358.5 693.5,358.5 694.5,361.2 695.5,361.2 696.5,361.2 697.5,361.2 698.5,361.2 699.5,361.2 700.5,361.2 701.5,361.2 702.5,361.2 703.5,361.2 704.5,361.2 705.5,361.2 706.5,361.2 707.5,361.2 708.5,361.2 709.5,361.2 710.5,358.5 711.5,358.5 712.5,358.5 713.5,358.5 714.5,358.5 715.5,358.5 716.5,358.5 717.5,358.5 718.5,361.2 719.5,361.2 720.5,358.5 721.5,358.5 722.5,358.5 723.5,355.8 724.5,353.1 725.5,353.1 726.5,353.1 727.5,353.1 728.5,355.8 729.5,353.1 730.5,350.3 731.5,347.6 732.5,350.3 733.5,350.3 734.5,347.6 735.5,344.9 736.5,347.6 737.5,347.6 738.5,350.3 739.5,350.3 740.5,350.3 741.5,347.6 742.5,347.6 743.5,347.6 744.5,347.6 745.5,347.6 746.5,347.6 747.5,347.6 748.5,350.3 749.5,350.3 750.5,350.3 751.5,353.1 752.5,355.8 753.5,353.1 754.5,350.3 755.5,350.3 756.5,350.3 757.5,350.3 758.5,350.3 759.5,350.3 760.5,350.3 761.5,350.3 762.5,350.3 763.5,350.3 764.5,350.3 765.5,350.3 766.5,347.6 767.5,347.6 768.5,347.6 769.5,347.6 770.5,347.6 771.5,344.9 772.5,344.9 773.5,344.9 774.5,344.9 775.5,344.9 776.5,344.9 777.5,347.6 778.5,344.9 779.5,344.9 780.5,344.9 781.5,350.3 782.5,350.3 783.5,344.9 784.5,344.9 785.5,347.6 786.5,347.6 787.5,347.6 788.5,347.6 789.5,350.3 790.5,350.3 791.5,347.6 792.5,347.6 793.5,350.3 794.5,350.3 795.5,350.3 796.5,350.3 797.5,350.3 798.5,350.3 799.5,350.3 800.5,350.3 801.5,347.6 802.5,347.6 803.5,347.6 804.5,347.6 805.5,347.6 806.5,350.3 807.5,347.6 808.5,347.6 809.5,350.3 810.5,347.6 811.5,344.9 812.5,347.6 813.5,350.3 814.5,347.6 815.5,350.3 816.5,347.6 817.5,350.3 818.5,350.3 819.5,350.3 820.5,350.3 821.5,350.3 822.5,347.6 823.5,350.3 824.5,350.3 825.5,347.6 826.5,344.9 827.5,344.9 828.5,347.6 829.5,347.6 830.5,344.9 831.5,347.6 832.5,350.3 833.5,350.3 834.5,350.3 835.5,347.6 836.5,347.6 837.5,347.6 838.5,347.6 839.5,344.9 840.5,344.9 841.5,344.9 842.5,344.9 843.5,344.9 844.5,344.9 845.5,342.2 846.5,342.2 847.5,344.9 848.5,347.6 849.5,347.6 850.5,344.9 851.5,344.9 852.5,347.6 853.5,347.6 854.5,344.9 855.5,344.9 856.5,344.9 857.5,344.9 858.5,347.6 859.5,347.6 860.5,344.9 861.5,342.2 862.5,339.5 863.5,344.9 864.5,347.6 865.5,342.2 866.5,342.2 867.5,342.2 868.5,344.9 869.5,344.9 870.5,342.2 871.5,342.2 872.5,344.9 873.5,344.9 874.5,350.3 875.5,350.3 876.5,353.1 877.5,355.8 878.5,355.8 879.5,358.5 880.5,361.2 881.5,361.2 882.5,361.2 883.5,361.2 884.5,361.2 885.5,358.5 886.5,358.5 887.5,355.8 888.5,355.8 889.5,355.8 890.5,355.8 891.5,355.8 892.5,358.5 893.5,358.5 894.5,361.2 895.5,361.2 896.5,361.2 897.5,361.2 898.5,361.2 899.5,361.2 900.5,361.2 901.5,361.2 902.5,358.5 903.5,358.5 904.5,358.5 905.5,358.5 906.5,358.5 907.5,358.5 908.5,358.5 909.5,361.2 910.5,361.2 911.5,361.2 912.5,361.2 913.5,361.2 914.5,361.2 915.5,361.2 916.5,361.2 917.5,361.2 918.5,361.2 919.5,361.2 920.5,361.2 921.5,361.2 922.5,361.2 923.5,361.2 924.5,361.2 925.5,361.2 926.5,361.2 927.5,361.2 928.5,361.2 929.5,361.2 930.5,361.2 931.5,361.2 932.5,361.2 933.5,361.2 934.5,361.2 935.5,361.2 936.5,361.2 937.5,361.2 938.5,361.2 939.5,361.2 940.5,361.2 941.5,361.2 942.5,361.2 943.5,361.2 944.5,361.2 945.5,361.2 946.5,361.2 947.5,361.2 948.5,361.2 949.5,361.2 950.5,361.2 951.5,361.2 952.5,361.2 953.5,361.2 954.5,361.2 955.5,361.2 956.5,361.2 957.5,361.2 958.5,361.2 959.5,361.2 960.5,361.2 961.5,361.2 962.5,361.2 963.5,361.2 964.5,361.2 965.5,361.2 966.5,361.2 967.5,361.2 968.5,361.2 969.5,361.2 970.5,361.2 971.5,361.2 972.5,361.2 973.5,361.2 974.5,361.2 975.5,361.2 976.5,361.2 977.5,361.2 978.5,361.2 979.5,361.2 980.5,361.2 981.5,361.2 982.5,361.2 983.5,361.2 984.5,361.2 985.5,361.2 986.5,361.2 987.5,361.2 988.5,361.2 989.5,361.2 990.5,361.2 991.5,361.2 992.5,361.2 993.5,361.2 994.5,361.2 995.5,361.2 996.5,361.2 997.5,361.2 998.5,361.2 999.5,361.2 1000.5,361.2 1001.5,361.2 1002.5,361.2 1003.5,361.2 1004.5,361.2 1005.5,361.2 1006.5,361.2 1007.5,361.2 1008.5,361.2 1009.5,361.2 1010.5,361.2 1011.5,361.2 1012.5,361.2 1013.5,361.2 1014.5,361.2 1015.5,361.2 1016.5,361.2 1017.5,361.2 1018.5,361.2 1019.5,361.2 1020.5,361.2 1021.5,361.2 1022.5,361.2 1023.5,361.2 1024.5,361.2 1025.5,361.2 1026.5,361.2 1027.5,361.2 1028.5,361.2 1029.5,361.2 1030.5,361.2 1031.5,361.2 1032.5,361.2 1033.5,361.2 1034.5,361.2 1035.5,361.2 1036.5,361.2 1037.5,361.2 1038.5,361.2 1039.5,361.2 1040.5,361.2 1041.5,361.2 1042.5,361.2 1043.5,361.2 1044.5,361.2 1045.5,361.2 1046.5,361.2 1047.5,361.2 1048.5,361.2 1049.5,361.2 1050.5,361.2 1051.5,361.2 1052.5,361.2 1053.5,361.2 1054.5,361.2 1055.5,361.2 1056.5,361.2 1057.5,361.2 1058.5,361.2 1059.5,361.2 1060.5,361.2 1061.5,361.2 1062.5,361.2 1063.5,361.2 1064.5,361.2 1065.5,361.2 1066.5,361.2 1067.5,361.2 1068.5,361.2 1069.5,361.2 1070.5,361.2 1071.5,361.2 1072.5,361.2 1073.5,361.2 1074.5,361.2 1075.5,361.2 1076.5,361.2 1077.5,361.2 1078.5,361.2 1079.5,361.2 1080.5,361.2 1081.5,361.2 1082.5,361.2 1083.5,361.2 1084.5,361.2 1085.5,361.2 1086.5,361.2 1087.5,361.2 1088.5,361.2 1089.5,361.2 1090.5,361.2 1091.5,361.2 1092.5,361.2 1093.5,361.2 1094.5,361.2 1095.5,361.2 1096.5,361.2 1097.5,361.2 1098.5,361.2 1099.5,361.2 1100.5,361.2 1101.5,361.2 1102.5,361.2 1103.5,361.2 1104.5,361.2 1105.5,361.2 1106.5,361.2 1107.5,361.2 1108.5,361.2 1109.5,361.2 1110.5,361.2 1111.5,361.2 1112.5,361.2 1113.5,361.2 1114.5,361.2 1115.5,361.2 1116.5,361.2 1117.5,361.2 1118.5,361.2 1119.5,361.2" fill="none" stroke="#00f000" stroke-width="1.5" stroke-linejoin="miter"/>
<polyline points="565.5,361.0 566.4,361.0 567.0,344.1 567.7,344.1 568.4,345.8 569.1,345.8 569.8,344.1 570.0,358.6 570.9,361.0 571.2,349.1 571.9,353.8 572.6,349.1 573.3,349.1 574.0,350.3 574.2,358.6 574.7,358.6 575.0,332.1 575.5,361.0 576.4,358.6 576.0,361.0 609.9,361.0 610.5,346.7 611.2,346.7 611.5,358.6 612.4,358.6 612.7,344.1 613.4,350.9 614.1,350.9 614.3,361.0 615.8,361.0 616.1,346.7 616.8,348.1 617.1,358.6 618.6,361.0 619.0,361.0 658.4,361.0 659.0,349.1 659.7,349.1 660.0,361.0 661.5,361.0 661.8,341.1 662.5,349.1 662.8,361.0 663.7,361.0 664.0,341.1 664.7,341.1 665.4,341.1 666.1,349.1 666.8,343.1 667.0,358.6 668.5,361.0 668.8,349.1 669.5,349.1 669.8,361.0 670.7,361.0 671.0,332.1 671.7,332.1 672.0,361.0 672.9,358.6 673.2,347.1 673.9,348.5 674.6,347.1 674.8,358.6 676.9,361.0 677.2,347.1 677.9,352.6 678.6,347.1 679.3,347.1 680.0,352.6 680.2,361.0 681.1,361.0 681.4,332.1 682.1,335.0 682.4,361.0 684.5,361.0 684.8,346.7 685.5,346.7 685.8,361.0 686.3,361.0 686.6,341.1 687.3,343.1 687.6,361.0 689.1,361.0 689.5,361.0 709.4,361.0 710.0,352.0 710.7,352.0 711.4,352.9 712.0,361.0 712.9,358.6 712.5,361.0 719.4,361.0 720.0,352.6 720.7,353.4 721.4,353.4 721.6,361.0 722.5,358.6 722.8,348.9 723.5,353.8 724.2,348.9 724.9,353.8 725.6,353.8 725.8,361.0 726.3,358.6 726.5,361.0 728.9,361.0 729.5,340.5 730.2,340.5 730.9,340.5 731.6,340.5 731.9,358.6 734.0,361.0 734.3,348.7 735.0,349.9 735.7,349.9 735.9,361.0 736.4,361.0 736.7,329.6 737.4,342.2 738.1,342.2 738.3,361.0 740.4,361.0 740.7,346.6 741.4,346.6 742.1,346.6 742.3,358.6 743.2,361.0 743.5,343.6 744.2,343.6 744.9,345.3 745.6,350.5 745.9,361.0 748.0,361.0 748.3,348.7 749.0,353.6 749.7,348.7 750.4,353.6 750.7,358.6 752.2,361.0 752.5,348.7 753.2,348.7 753.9,348.7 754.1,358.6 754.6,358.6 754.9,346.2 755.6,346.2 756.3,352.1 756.5,358.6 758.6,361.0 758.9,348.7 759.6,348.7 760.3,353.6 761.0,348.7 761.7,348.7 761.9,358.6 762.4,358.6 762.7,340.5 763.4,348.7 763.7,361.0 765.8,358.6 766.1,340.5 766.8,340.5 767.5,340.5 768.2,340.5 768.5,358.6 769.0,358.6 769.3,348.7 770.0,348.7 770.3,361.0 771.2,358.6 771.5,340.5 772.2,340.5 772.5,361.0 773.0,361.0 773.3,340.5 774.0,342.5 774.7,342.5 775.4,340.5 775.7,358.6 777.8,361.0 778.1,340.5 778.8,340.5 779.5,342.5 779.7,358.6 781.8,361.0 782.1,340.5 782.8,340.5 783.5,342.5 783.7,361.0 784.6,361.0 784.9,348.7 785.6,353.6 786.3,348.7 787.0,349.9 787.3,361.0 789.4,361.0 789.7,343.6 790.4,343.6 791.1,343.6 791.8,343.6 792.1,358.6 794.2,361.0 794.5,346.2 795.2,352.1 795.5,358.6 797.0,358.6 797.3,340.5 798.0,348.7 798.7,342.5 799.4,340.5 799.7,361.0 800.6,361.0 800.9,346.6 801.6,352.4 802.3,352.4 803.0,346.6 803.3,361.0 804.8,361.0 805.1,343.6 805.8,343.6 806.5,345.3 806.7,358.6 807.2,361.0 807.5,346.2 808.2,346.2 808.5,358.6 809.4,361.0 809.7,340.5 810.4,340.5 811.1,342.5 811.3,361.0 813.4,361.0 813.7,340.5 814.4,340.5 814.7,361.0 816.2,358.6 816.5,340.5 817.2,348.7 817.9,342.5 818.1,361.0 820.2,361.0 820.5,346.2 821.2,346.2 821.9,352.1 822.6,346.2 822.9,358.6 823.4,361.0 823.7,343.6 824.4,343.6 825.1,343.6 825.8,350.5 826.5,345.3 826.7,361.0 828.8,361.0 829.1,340.5 829.8,342.5 830.5,340.5 830.7,361.0 832.8,361.0 833.1,343.6 833.8,343.6 834.1,358.6 835.0,358.6 835.3,343.6 836.0,345.3 836.7,343.6 837.4,345.3 837.7,358.6 839.2,358.6 839.5,340.5 840.2,348.7 840.9,348.7 841.6,340.5 842.3,348.7 842.5,358.6 843.0,358.6 843.3,340.5 844.0,348.7 844.7,340.5 845.4,348.7 846.1,342.5 846.3,361.0 848.4,361.0 848.7,343.6 849.4,343.6 850.1,345.3 850.8,343.6 851.5,343.6 851.7,361.0 853.2,361.0 853.5,348.7 854.2,348.7 854.9,349.9 855.1,358.6 855.6,361.0 855.9,336.9 856.6,336.9 857.3,336.9 857.5,358.6 859.0,361.0 859.3,336.9 860.0,346.5 860.7,336.9 861.4,339.3 862.1,336.9 862.3,361.0 864.4,358.6 864.7,340.5 865.4,342.5 866.1,342.5 866.8,342.5 867.5,342.5 867.7,358.6 868.6,361.0 868.9,346.2 869.6,346.2 870.3,347.7 871.0,347.7 871.3,361.0 871.8,361.0 872.1,348.7 872.8,348.7 873.5,348.7 873.7,361.0 875.8,361.0 876.5,361.0 884.9,361.0 885.5,345.3 886.2,351.6 886.9,351.6 887.1,361.0 888.6,361.0 888.9,345.3 889.5,361.0 890.4,361.0 890.0,361.0 901.2,361.0 901.8,353.8 902.5,353.8 903.0,361.0 903.9,361.0 903.5,361.0 1120.0,361.0" fill="none" stroke="#008000" stroke-width="1.6" stroke-linejoin="miter"/>
<path d="M565.5,361H1121" stroke="#008000" stroke-width="2"/>
<polyline points="565.7,258.5 567.7,258.5 567.7,256.7 575.7,256.7 575.7,254.8 584.7,254.8 584.7,253.0 589.7,253.0 589.7,251.1 594.7,251.1 594.7,249.2 599.7,249.2 599.7,247.4 604.7,247.4 604.7,245.5 609.7,245.5 609.7,243.7 615.7,243.7 615.7,241.8 622.7,241.8 622.7,239.9 628.7,239.9 628.7,238.1 634.7,238.1 634.7,236.2 641.7,236.2 641.7,234.4 650.7,234.4 650.7,232.5 660.7,232.5 660.7,230.6 670.7,230.6 670.7,228.8 681.7,228.8 681.7,226.9 688.7,226.9 688.7,225.1 694.7,225.1 694.7,223.2 700.7,223.2 700.7,221.3 704.7,221.3 704.7,219.5 707.7,219.5 707.7,217.6 710.7,217.6 710.7,215.8 712.7,215.8 712.7,213.9 719.7,213.9 719.7,212.0 730.7,212.0 730.7,210.2 736.7,210.2 736.7,208.3 741.7,208.3 741.7,206.5 748.7,206.5 748.7,204.6 756.7,204.6 756.7,202.7 763.7,202.7 763.7,200.9 771.7,200.9 771.7,199.0 783.7,199.0 783.7,197.2 797.7,197.2 797.7,195.3 814.7,195.3 814.7,193.4 837.7,193.4 837.7,191.6 847.7,191.6 847.7,189.7 856.7,189.7 856.7,187.9 860.7,187.9 860.7,186.0 864.7,186.0 864.7,184.1 868.7,184.1 868.7,182.3 871.7,182.3 871.7,180.4 876.7,180.4 876.7,178.6 883.7,178.6 883.7,176.7 890.7,176.7 890.7,174.8 897.7,174.8 897.7,173.0 904.7,173.0 904.7,171.1 912.7,171.1 912.7,169.3 920.7,169.3 920.7,167.4 927.7,167.4 927.7,165.5 935.7,165.5 935.7,163.7 943.7,163.7 943.7,161.8 951.7,161.8 951.7,160.0 958.7,160.0 958.7,158.1 965.7,158.1 965.7,156.2 970.7,156.2 970.7,154.4 975.7,154.4 975.7,152.5 980.7,152.5 980.7,150.7 1000.7,150.7 1000.7,148.8 1008.7,148.8 1008.7,146.9 1020.7,146.9 1020.7,145.1 1035.7,145.1 1035.7,143.2 1042.7,143.2 1042.7,141.4 1049.7,141.4 1049.7,139.5 1057.7,139.5 1057.7,137.6 1067.7,137.6 1067.7,135.8 1078.7,135.8 1078.7,133.9 1088.7,133.9 1088.7,132.1 1097.7,132.1 1097.7,130.2 1106.7,130.2 1106.7,128.3 1115.7,128.3 1115.7,126.5 1120.4,126.5" fill="none" stroke="#ff00ff" stroke-width="2.1" stroke-linejoin="miter"/>
</g>
<text class="a" x="501.2" y="38.8" font-size="12" fill="#fff" stroke="#fff" stroke-width="0.12" text-anchor="start" textLength="60.8" lengthAdjust="spacingAndGlyphs">Gustspeed</text>
<text class="a" x="617.0" y="38.8" font-size="12" fill="#fff" stroke="#fff" stroke-width="0.12" text-anchor="start" textLength="45.0" lengthAdjust="spacingAndGlyphs">0.0 mph</text>
<text class="a" x="666.2" y="38.5" font-size="12" fill="#00e800" stroke="#00e800" stroke-width="0.12" text-anchor="start" textLength="33.8" lengthAdjust="spacingAndGlyphs">Avspd</text>
<text class="a" x="729.7" y="38.4" font-size="12" fill="#00e800" stroke="#00e800" stroke-width="0.12" text-anchor="start" textLength="45.0" lengthAdjust="spacingAndGlyphs">0.0 mph</text>
<text class="t" x="787.5" y="40.8" font-size="12" fill="#ffff00" stroke="#ffff00" stroke-width="0.32" text-anchor="start" textLength="30.8" lengthAdjust="spacingAndGlyphs">02:50</text>
<text class="a" x="972.5" y="38.8" font-size="12" fill="#ff00ff" stroke="#ff00ff" stroke-width="0.12" text-anchor="start" textLength="58.0" lengthAdjust="spacingAndGlyphs">Barometer</text>
<text class="a" x="1078.0" y="40.8" font-size="12" fill="#ff00ff" stroke="#ff00ff" stroke-width="0.12" text-anchor="start" textLength="46.5" lengthAdjust="spacingAndGlyphs">30.18 in.</text>
</g>
<g id="chart-wind-dir">
<rect x="567.5" y="389.8" width="560" height="107.2" fill="#8c8c8c"/>
<rect x="570.00" y="390.60" width="557.00" height="4.85" fill="#000000"/><rect x="570.00" y="394.95" width="557.00" height="4.85" fill="#090909"/><rect x="570.00" y="399.31" width="557.00" height="4.85" fill="#111111"/><rect x="570.00" y="403.66" width="557.00" height="4.85" fill="#1a1a1a"/><rect x="570.00" y="408.02" width="557.00" height="4.85" fill="#232323"/><rect x="570.00" y="412.37" width="557.00" height="4.85" fill="#2b2b2b"/><rect x="570.00" y="416.73" width="557.00" height="4.85" fill="#343434"/><rect x="570.00" y="421.08" width="557.00" height="4.85" fill="#3d3d3d"/><rect x="570.00" y="425.43" width="557.00" height="4.85" fill="#464646"/><rect x="570.00" y="429.79" width="557.00" height="4.85" fill="#4e4e4e"/><rect x="570.00" y="434.14" width="557.00" height="4.85" fill="#575757"/><rect x="570.00" y="438.50" width="557.00" height="4.85" fill="#606060"/><rect x="570.00" y="442.85" width="557.00" height="4.85" fill="#686868"/><rect x="570.00" y="447.20" width="557.00" height="4.85" fill="#717171"/><rect x="570.00" y="451.56" width="557.00" height="4.85" fill="#7a7a7a"/><rect x="570.00" y="455.91" width="557.00" height="4.85" fill="#828282"/><rect x="570.00" y="460.27" width="557.00" height="4.85" fill="#8b8b8b"/><rect x="570.00" y="464.62" width="557.00" height="4.85" fill="#949494"/><rect x="570.00" y="468.98" width="557.00" height="4.85" fill="#9d9d9d"/><rect x="570.00" y="473.33" width="557.00" height="4.85" fill="#a5a5a5"/><rect x="570.00" y="477.68" width="557.00" height="4.85" fill="#aeaeae"/><rect x="570.00" y="482.04" width="557.00" height="4.85" fill="#b7b7b7"/><rect x="570.00" y="486.39" width="557.00" height="4.85" fill="#bfbfbf"/><rect x="570.00" y="490.75" width="557.00" height="4.85" fill="#c8c8c8"/>
<path d="M572,492.50H1127" stroke="#8c8c8c" stroke-width="1.2" stroke-dasharray="3 7.5" stroke-dashoffset="1" fill="none"/><path d="M572,468.00H1127" stroke="#b0b0b0" stroke-width="1.2" stroke-dasharray="3 7.5" stroke-dashoffset="1" fill="none"/><path d="M572,443.50H1127" stroke="#b8b8b8" stroke-width="1.2" stroke-dasharray="3 7.5" stroke-dashoffset="1" fill="none"/><path d="M572,419.01H1127" stroke="#b4b4b4" stroke-width="1.2" stroke-dasharray="3 7.5" stroke-dashoffset="1" fill="none"/><path d="M572,394.51H1127" stroke="#b4b4b4" stroke-width="1.2" stroke-dasharray="3 7.5" stroke-dashoffset="1" fill="none"/>
<path d="M560,492.50H567.6M563.8,486.38H567.6M563.8,480.25H567.6M563.8,474.13H567.6M560,468.00H567.6M563.8,461.88H567.6M563.8,455.75H567.6M563.8,449.63H567.6M560,443.50H567.6M563.8,437.38H567.6M563.8,431.25H567.6M563.8,425.13H567.6M560,419.01H567.6M563.8,412.88H567.6M563.8,406.76H567.6M563.8,400.63H567.6M560,394.51H567.6" stroke="#ffff00" stroke-width="1.3" fill="none"/>
<text class="t" x="556.6" y="499.9" font-size="15.8" fill="#ffff00" stroke="#ffff00" stroke-width="0.42" text-anchor="end" textLength="8.6" lengthAdjust="spacingAndGlyphs">0</text>
<text class="t" x="556.6" y="475.4" font-size="15.8" fill="#ffff00" stroke="#ffff00" stroke-width="0.42" text-anchor="end" textLength="17.2" lengthAdjust="spacingAndGlyphs">90</text>
<text class="t" x="556.6" y="450.9" font-size="15.8" fill="#ffff00" stroke="#ffff00" stroke-width="0.42" text-anchor="end" textLength="25.8" lengthAdjust="spacingAndGlyphs">180</text>
<text class="t" x="556.6" y="426.4" font-size="15.8" fill="#ffff00" stroke="#ffff00" stroke-width="0.42" text-anchor="end" textLength="25.8" lengthAdjust="spacingAndGlyphs">270</text>
<text class="t" x="556.6" y="401.9" font-size="15.8" fill="#ffff00" stroke="#ffff00" stroke-width="0.42" text-anchor="end" textLength="25.8" lengthAdjust="spacingAndGlyphs">360</text>
<text class="t" x="1145.6" y="403.9" font-size="12" fill="#ffff00" stroke="#ffff00" stroke-width="0.2" text-anchor="start">N</text>
<text class="t" x="1145.6" y="428.1" font-size="12" fill="#ffff00" stroke="#ffff00" stroke-width="0.2" text-anchor="start">W</text>
<text class="t" x="1145.6" y="452.4" font-size="12" fill="#ffff00" stroke="#ffff00" stroke-width="0.2" text-anchor="start">S</text>
<text class="t" x="1145.6" y="474.1" font-size="12" fill="#ffff00" stroke="#ffff00" stroke-width="0.2" text-anchor="start">E</text>
<text class="t" x="1145.6" y="497.1" font-size="12" fill="#ffff00" stroke="#ffff00" stroke-width="0.2" text-anchor="start">N</text>
<text class="a" x="1165.5" y="448.8" font-size="12" fill="#ffff00" stroke="#ffff00" stroke-width="0.12" text-anchor="start" textLength="19.0" lengthAdjust="spacingAndGlyphs">280</text>
<path d="M572,493.4H1125" stroke="#787878" stroke-width="1.2"/>
<polyline points="572.5,425.0 573.5,421.0 574.5,427.0 576.0,417.5 577.0,428.0 578.0,432.5 579.0,426.0 580.0,431.0 581.0,429.2 597.0,429.2 597.5,421.2 617.5,421.2 618.0,417.5 620.5,433.0 622.0,421.0 630.0,421.0 631.0,433.0 633.0,421.0 635.0,424.0 637.0,433.0 639.0,419.0 641.0,433.0 643.0,421.0 646.0,425.0 648.0,435.0 648.5,417.0 662.0,417.0 662.5,435.0 663.5,418.0 665.3,430.0 667.1,430.0 668.4,424.0 669.4,432.0 671.2,432.0 672.2,427.0 673.2,432.0 674.0,415.0 675.3,427.0 677.1,415.0 678.1,432.0 679.1,418.0 679.9,424.0 681.7,427.0 684.0,407.5 685.0,415.0 686.3,427.0 688.0,437.5 689.0,430.0 689.8,430.0 692.0,421.2 705.0,421.2 706.5,419.0 708.0,418.0 710.0,421.2 728.0,421.2 729.0,405.3 729.8,428.4 731.4,407.8 733.0,423.9 733.8,412.5 734.6,420.2 736.6,419.9 740.0,419.9 741.6,428.4 743.6,413.2 745.2,424.9 746.8,413.0 749.0,413.0 752.2,431.8 755.7,431.8 757.5,416.1 759.5,430.9 760.7,419.2 762.7,420.0 763.7,408.9 765.3,427.7 767.3,420.4 768.9,420.4 772.1,414.9 772.8,420.4 773.1,420.3 775.1,409.0 776.7,432.9 777.9,417.4 780.3,428.0 781.0,442.5 782.3,418.0 784.3,395.0 785.6,414.0 786.7,404.1 788.7,420.5 789.7,421.5 790.7,422.3 792.3,413.4 793.9,431.4 795.1,407.2 796.7,423.5 797.5,409.3 798.5,420.1 799.7,415.5 800.7,430.1 803.0,430.1 804.4,417.5 806.7,417.5 808.3,425.1 809.9,419.7 810.9,430.5 812.9,418.2 814.9,421.2 815.7,413.4 817.3,423.0 821.1,423.0 821.9,413.2 824.9,413.2 825.9,423.3 827.5,422.8 831.0,422.8 832.0,421.7 834.0,416.8 834.8,426.6 835.8,414.1 837.5,426.0 838.7,444.0 840.0,424.0 843.0,417.7 844.6,433.0 846.2,408.0 849.5,423.6 849.9,408.0 851.1,412.8 852.7,428.7 853.5,405.9 856.5,405.9 858.0,421.0 860.0,414.8 861.2,429.3 862.8,409.6 864.8,418.4 865.6,408.1 867.2,422.3 869.7,422.3 872.5,420.5 874.1,419.3 875.1,417.7 876.3,427.3 877.3,412.5 878.5,425.6 879.5,420.7 880.5,424.6 882.1,412.2 883.7,426.5 884.9,418.4 886.9,428.3 887.9,411.6 889.1,430.9 889.9,415.9 891.5,428.5 894.9,428.5 895.0,414.3 895.8,427.0 899.8,427.0 901.8,421.2 903.4,426.5 904.4,419.0 906.0,425.7 906.5,407.5 907.5,424.0 908.5,412.0 910.0,412.5 911.0,421.2 921.0,421.2 922.5,418.0 923.0,421.2 1035.0,421.2 1035.3,454.2 1060.0,454.2 1060.3,450.0 1067.0,450.0 1067.3,409.5 1068.3,408.0 1069.5,418.5 1070.5,417.0 1123.5,417.0" fill="none" stroke="#ffff00" stroke-width="1.5" stroke-linejoin="miter"/>
</g>
<g id="chart-temp-hum">
<rect x="495" y="496.9" width="705" height="26.5" fill="#000"/>
<rect x="570.2" y="523.6" width="558" height="284.2" fill="#8a8a8a"/>
<rect x="574.80" y="524.30" width="551.20" height="12.15" fill="#000000"/><rect x="574.80" y="535.95" width="551.20" height="12.15" fill="#080808"/><rect x="574.80" y="547.61" width="551.20" height="12.15" fill="#101010"/><rect x="574.80" y="559.26" width="551.20" height="12.15" fill="#181818"/><rect x="574.80" y="570.92" width="551.20" height="12.15" fill="#202020"/><rect x="574.80" y="582.57" width="551.20" height="12.15" fill="#282828"/><rect x="574.80" y="594.22" width="551.20" height="12.15" fill="#313131"/><rect x="574.80" y="605.88" width="551.20" height="12.15" fill="#393939"/><rect x="574.80" y="617.53" width="551.20" height="12.15" fill="#414141"/><rect x="574.80" y="629.19" width="551.20" height="12.15" fill="#494949"/><rect x="574.80" y="640.84" width="551.20" height="12.15" fill="#515151"/><rect x="574.80" y="652.50" width="551.20" height="12.15" fill="#595959"/><rect x="574.80" y="664.15" width="551.20" height="12.15" fill="#616161"/><rect x="574.80" y="675.80" width="551.20" height="12.15" fill="#696969"/><rect x="574.80" y="687.46" width="551.20" height="12.15" fill="#717171"/><rect x="574.80" y="699.11" width="551.20" height="12.15" fill="#797979"/><rect x="574.80" y="710.77" width="551.20" height="12.15" fill="#818181"/><rect x="574.80" y="722.42" width="551.20" height="12.15" fill="#898989"/><rect x="574.80" y="734.08" width="551.20" height="12.15" fill="#929292"/><rect x="574.80" y="745.73" width="551.20" height="12.15" fill="#9a9a9a"/><rect x="574.80" y="757.38" width="551.20" height="12.15" fill="#a2a2a2"/><rect x="574.80" y="769.04" width="551.20" height="12.15" fill="#aaaaaa"/><rect x="574.80" y="780.69" width="551.20" height="12.15" fill="#b2b2b2"/><rect x="574.80" y="792.35" width="551.20" height="12.15" fill="#bababa"/>
<rect x="574.8" y="523.6" width="551.2" height="0.9" fill="#3c3c3c"/>
<path d="M575.8,776.16H1126" stroke="#888888" stroke-width="1.1" stroke-dasharray="1.15 1.15" fill="none"/><path d="M575.8,748.92H1126" stroke="#8d8d8d" stroke-width="1.1" stroke-dasharray="1.15 1.15" fill="none"/><path d="M575.8,721.68H1126" stroke="#929292" stroke-width="1.1" stroke-dasharray="1.15 1.15" fill="none"/><path d="M575.8,694.44H1126" stroke="#969696" stroke-width="1.1" stroke-dasharray="1.15 1.15" fill="none"/><path d="M575.8,667.20H1126" stroke="#9b9b9b" stroke-width="1.1" stroke-dasharray="1.15 1.15" fill="none"/><path d="M575.8,639.96H1126" stroke="#a0a0a0" stroke-width="1.1" stroke-dasharray="1.15 1.15" fill="none"/><path d="M575.8,612.72H1126" stroke="#a4a4a4" stroke-width="1.1" stroke-dasharray="1.15 1.15" fill="none"/><path d="M575.8,585.48H1126" stroke="#a9a9a9" stroke-width="1.1" stroke-dasharray="1.15 1.15" fill="none"/><path d="M575.8,558.24H1126" stroke="#aeaeae" stroke-width="1.1" stroke-dasharray="1.15 1.15" fill="none"/><path d="M575.8,531.00H1126" stroke="#b2b2b2" stroke-width="1.1" stroke-dasharray="1.15 1.15" fill="none"/>
<path d="M595.4,525.3V804M602.70,525.3V804M648.12,525.3V804M693.54,525.3V804M738.96,525.3V804M784.38,525.3V804M829.80,525.3V804M875.22,525.3V804M920.64,525.3V804M966.06,525.3V804M1011.48,525.3V804M1056.90,525.3V804M1102.32,525.3V804" stroke="url(#gridv3)" stroke-width="1.1" stroke-dasharray="3 7.6" stroke-dashoffset="-1" fill="none"/>
<clipPath id="c3lab"><rect x="495" y="524" width="705" height="330"/></clipPath><g clip-path="url(#c3lab)">
<rect x="540.2" y="524" width="2.9" height="282.7" fill="#0000ff"/>
<path d="M533.5,800.20H540.5M536.5,793.39H540.5M536.5,786.58H540.5M536.5,779.77H540.5M533.5,772.96H540.5M536.5,766.15H540.5M536.5,759.34H540.5M536.5,752.53H540.5M533.5,745.72H540.5M536.5,738.91H540.5M536.5,732.10H540.5M536.5,725.29H540.5M533.5,718.48H540.5M536.5,711.67H540.5M536.5,704.86H540.5M536.5,698.05H540.5M533.5,691.24H540.5M536.5,684.43H540.5M536.5,677.62H540.5M536.5,670.81H540.5M533.5,664.00H540.5M536.5,657.19H540.5M536.5,650.38H540.5M536.5,643.57H540.5M533.5,636.76H540.5M536.5,629.95H540.5M536.5,623.14H540.5M536.5,616.33H540.5M533.5,609.52H540.5M536.5,602.71H540.5M536.5,595.90H540.5M536.5,589.09H540.5M533.5,582.28H540.5M536.5,575.47H540.5M536.5,568.66H540.5M536.5,561.85H540.5M533.5,555.04H540.5M536.5,548.23H540.5M536.5,541.42H540.5M536.5,534.61H540.5M533.5,527.80H540.5" stroke="#0000ff" stroke-width="1.4" fill="none"/>
<text class="t" x="531.8" y="808.3" font-size="15.8" fill="#0000ff" stroke="#0000ff" stroke-width="0.25" text-anchor="end">0</text>
<text class="t" x="531.8" y="781.1" font-size="15.8" fill="#0000ff" stroke="#0000ff" stroke-width="0.25" text-anchor="end">10</text>
<text class="t" x="531.8" y="753.8" font-size="15.8" fill="#0000ff" stroke="#0000ff" stroke-width="0.25" text-anchor="end">20</text>
<text class="t" x="531.8" y="726.6" font-size="15.8" fill="#0000ff" stroke="#0000ff" stroke-width="0.25" text-anchor="end">30</text>
<text class="t" x="531.8" y="699.3" font-size="15.8" fill="#0000ff" stroke="#0000ff" stroke-width="0.25" text-anchor="end">40</text>
<text class="t" x="531.8" y="672.1" font-size="15.8" fill="#0000ff" stroke="#0000ff" stroke-width="0.25" text-anchor="end">50</text>
<text class="t" x="531.8" y="644.9" font-size="15.8" fill="#0000ff" stroke="#0000ff" stroke-width="0.25" text-anchor="end">60</text>
<text class="t" x="531.8" y="617.6" font-size="15.8" fill="#0000ff" stroke="#0000ff" stroke-width="0.25" text-anchor="end">70</text>
<text class="t" x="531.8" y="590.4" font-size="15.8" fill="#0000ff" stroke="#0000ff" stroke-width="0.25" text-anchor="end">80</text>
<text class="t" x="531.8" y="563.1" font-size="15.8" fill="#0000ff" stroke="#0000ff" stroke-width="0.25" text-anchor="end">90</text>
<text class="t" x="531.8" y="535.9" font-size="15.8" fill="#0000ff" stroke="#0000ff" stroke-width="0.25" text-anchor="end">100</text>
<path d="M564,800.50H570.6M566.6,794.74H570.6M566.6,788.97H570.6M566.6,783.21H570.6M564,777.44H570.6M566.6,771.67H570.6M566.6,765.91H570.6M566.6,760.14H570.6M564,754.38H570.6M566.6,748.62H570.6M566.6,742.85H570.6M566.6,737.09H570.6M564,731.32H570.6M566.6,725.55H570.6M566.6,719.79H570.6M566.6,714.02H570.6M564,708.26H570.6M566.6,702.50H570.6M566.6,696.73H570.6M566.6,690.97H570.6M564,685.20H570.6M566.6,679.43H570.6M566.6,673.67H570.6M566.6,667.90H570.6M564,662.14H570.6M566.6,656.38H570.6M566.6,650.61H570.6M566.6,644.85H570.6M564,639.08H570.6M566.6,633.32H570.6M566.6,627.55H570.6M566.6,621.78H570.6M564,616.02H570.6M566.6,610.25H570.6M566.6,604.49H570.6M566.6,598.73H570.6M564,592.96H570.6M566.6,587.19H570.6M566.6,581.43H570.6M566.6,575.66H570.6M564,569.90H570.6M566.6,564.13H570.6M566.6,558.37H570.6M566.6,552.61H570.6M564,546.84H570.6M566.6,541.08H570.6M566.6,535.31H570.6M566.6,529.55H570.6M564,523.78H570.6" stroke="#ff0000" stroke-width="1.3" fill="none"/>
<text class="t" x="563.4" y="808.6" font-size="15.8" fill="#ff0000" stroke="#ff0000" stroke-width="0.25" text-anchor="end">0</text>
<text class="t" x="563.4" y="785.5" font-size="15.8" fill="#ff0000" stroke="#ff0000" stroke-width="0.25" text-anchor="end">0.1</text>
<text class="t" x="563.4" y="762.5" font-size="15.8" fill="#ff0000" stroke="#ff0000" stroke-width="0.25" text-anchor="end">0.2</text>
<text class="t" x="563.4" y="739.4" font-size="15.8" fill="#ff0000" stroke="#ff0000" stroke-width="0.25" text-anchor="end">0.3</text>
<text class="t" x="563.4" y="716.4" font-size="15.8" fill="#ff0000" stroke="#ff0000" stroke-width="0.25" text-anchor="end">0.4</text>
<text class="t" x="563.4" y="693.3" font-size="15.8" fill="#ff0000" stroke="#ff0000" stroke-width="0.25" text-anchor="end">0.5</text>
<text class="t" x="563.4" y="670.2" font-size="15.8" fill="#ff0000" stroke="#ff0000" stroke-width="0.25" text-anchor="end">0.6</text>
<text class="t" x="563.4" y="647.2" font-size="15.8" fill="#ff0000" stroke="#ff0000" stroke-width="0.25" text-anchor="end">0.7</text>
<text class="t" x="563.4" y="624.1" font-size="15.8" fill="#ff0000" stroke="#ff0000" stroke-width="0.25" text-anchor="end">0.8</text>
<text class="t" x="563.4" y="601.1" font-size="15.8" fill="#ff0000" stroke="#ff0000" stroke-width="0.25" text-anchor="end">0.9</text>
<text class="t" x="563.4" y="578.0" font-size="15.8" fill="#ff0000" stroke="#ff0000" stroke-width="0.25" text-anchor="end">1</text>
<text class="t" x="563.4" y="554.9" font-size="15.8" fill="#ff0000" stroke="#ff0000" stroke-width="0.25" text-anchor="end">1.1</text>
<text class="t" x="563.4" y="531.9" font-size="15.8" fill="#ff0000" stroke="#ff0000" stroke-width="0.25" text-anchor="end">1.2</text>
<path d="M1127.8,800.80H1134.6M1127.8,796.30H1131.8M1127.8,791.81H1131.8M1127.8,787.31H1131.8M1127.8,782.82H1131.8M1127.8,778.32H1134.6M1127.8,773.83H1131.8M1127.8,769.33H1131.8M1127.8,764.84H1131.8M1127.8,760.34H1131.8M1127.8,755.85H1134.6M1127.8,751.35H1131.8M1127.8,746.86H1131.8M1127.8,742.37H1131.8M1127.8,737.87H1131.8M1127.8,733.38H1134.6M1127.8,728.88H1131.8M1127.8,724.38H1131.8M1127.8,719.89H1131.8M1127.8,715.39H1131.8M1127.8,710.90H1134.6M1127.8,706.40H1131.8M1127.8,701.91H1131.8M1127.8,697.41H1131.8M1127.8,692.92H1131.8M1127.8,688.42H1134.6M1127.8,683.93H1131.8M1127.8,679.43H1131.8M1127.8,674.94H1131.8M1127.8,670.44H1131.8M1127.8,665.95H1134.6M1127.8,661.45H1131.8M1127.8,656.96H1131.8M1127.8,652.46H1131.8M1127.8,647.97H1131.8M1127.8,643.47H1134.6M1127.8,638.98H1131.8M1127.8,634.48H1131.8M1127.8,629.99H1131.8M1127.8,625.49H1131.8M1127.8,621.00H1134.6M1127.8,616.50H1131.8M1127.8,612.01H1131.8M1127.8,607.51H1131.8M1127.8,603.02H1131.8M1127.8,598.52H1134.6M1127.8,594.03H1131.8M1127.8,589.53H1131.8M1127.8,585.04H1131.8M1127.8,580.54H1131.8M1127.8,576.05H1134.6M1127.8,571.55H1131.8M1127.8,567.06H1131.8M1127.8,562.56H1131.8M1127.8,558.07H1131.8M1127.8,553.57H1134.6M1127.8,549.08H1131.8M1127.8,544.58H1131.8M1127.8,540.09H1131.8M1127.8,535.60H1131.8M1127.8,531.10H1134.6M1127.8,526.61H1131.8" stroke="#00ff00" stroke-width="1.4" fill="none"/>
<rect x="1126" y="523.6" width="2.2" height="284" fill="#8a8a8a"/><rect x="1128.2" y="524.5" width="1.6" height="283.2" fill="#707070" opacity="0.85"/>
<rect x="1165.6" y="524" width="2.9" height="283" fill="#e2c4e2"/><rect x="1165.6" y="524" width="5.2" height="1.4" fill="#e2c4e2"/>
<path d="M1168,800.80H1173.6M1168,796.30H1170.8M1168,791.81H1170.8M1168,787.31H1170.8M1168,782.82H1170.8M1168,778.32H1173.6M1168,773.83H1170.8M1168,769.33H1170.8M1168,764.84H1170.8M1168,760.34H1170.8M1168,755.85H1173.6M1168,751.35H1170.8M1168,746.86H1170.8M1168,742.37H1170.8M1168,737.87H1170.8M1168,733.38H1173.6M1168,728.88H1170.8M1168,724.38H1170.8M1168,719.89H1170.8M1168,715.39H1170.8M1168,710.90H1173.6M1168,706.40H1170.8M1168,701.91H1170.8M1168,697.41H1170.8M1168,692.92H1170.8M1168,688.42H1173.6M1168,683.93H1170.8M1168,679.43H1170.8M1168,674.94H1170.8M1168,670.44H1170.8M1168,665.95H1173.6M1168,661.45H1170.8M1168,656.96H1170.8M1168,652.46H1170.8M1168,647.97H1170.8M1168,643.47H1173.6M1168,638.98H1170.8M1168,634.48H1170.8M1168,629.99H1170.8M1168,625.49H1170.8M1168,621.00H1173.6M1168,616.50H1170.8M1168,612.01H1170.8M1168,607.51H1170.8M1168,603.02H1170.8M1168,598.52H1173.6M1168,594.03H1170.8M1168,589.53H1170.8M1168,585.04H1170.8M1168,580.54H1170.8M1168,576.05H1173.6M1168,571.55H1170.8M1168,567.06H1170.8M1168,562.56H1170.8M1168,558.07H1170.8M1168,553.57H1173.6M1168,549.08H1170.8M1168,544.58H1170.8M1168,540.09H1170.8M1168,535.60H1170.8M1168,531.10H1173.6" stroke="#e2c4e2" stroke-width="1.3" fill="none"/>
<text class="t" x="1137.3" y="808.9" font-size="15.8" fill="#00ff00" stroke="#00ff00" stroke-width="0.25" text-anchor="start">30</text>
<text class="t" x="1176.2" y="808.9" font-size="15.8" fill="#e2c4e2" stroke="#e2c4e2" stroke-width="0.25" text-anchor="start">30</text>
<text class="t" x="1137.3" y="786.4" font-size="15.8" fill="#00ff00" stroke="#00ff00" stroke-width="0.25" text-anchor="start">35</text>
<text class="t" x="1176.2" y="786.4" font-size="15.8" fill="#e2c4e2" stroke="#e2c4e2" stroke-width="0.25" text-anchor="start">35</text>
<text class="t" x="1137.3" y="763.9" font-size="15.8" fill="#00ff00" stroke="#00ff00" stroke-width="0.25" text-anchor="start">40</text>
<text class="t" x="1176.2" y="763.9" font-size="15.8" fill="#e2c4e2" stroke="#e2c4e2" stroke-width="0.25" text-anchor="start">40</text>
<text class="t" x="1137.3" y="741.5" font-size="15.8" fill="#00ff00" stroke="#00ff00" stroke-width="0.25" text-anchor="start">45</text>
<text class="t" x="1176.2" y="741.5" font-size="15.8" fill="#e2c4e2" stroke="#e2c4e2" stroke-width="0.25" text-anchor="start">45</text>
<text class="t" x="1137.3" y="719.0" font-size="15.8" fill="#00ff00" stroke="#00ff00" stroke-width="0.25" text-anchor="start">50</text>
<text class="t" x="1176.2" y="719.0" font-size="15.8" fill="#e2c4e2" stroke="#e2c4e2" stroke-width="0.25" text-anchor="start">50</text>
<text class="t" x="1137.3" y="696.5" font-size="15.8" fill="#00ff00" stroke="#00ff00" stroke-width="0.25" text-anchor="start">55</text>
<text class="t" x="1176.2" y="696.5" font-size="15.8" fill="#e2c4e2" stroke="#e2c4e2" stroke-width="0.25" text-anchor="start">55</text>
<text class="t" x="1137.3" y="674.0" font-size="15.8" fill="#00ff00" stroke="#00ff00" stroke-width="0.25" text-anchor="start">60</text>
<text class="t" x="1176.2" y="674.0" font-size="15.8" fill="#e2c4e2" stroke="#e2c4e2" stroke-width="0.25" text-anchor="start">60</text>
<text class="t" x="1137.3" y="651.6" font-size="15.8" fill="#00ff00" stroke="#00ff00" stroke-width="0.25" text-anchor="start">65</text>
<text class="t" x="1176.2" y="651.6" font-size="15.8" fill="#e2c4e2" stroke="#e2c4e2" stroke-width="0.25" text-anchor="start">65</text>
<text class="t" x="1137.3" y="629.1" font-size="15.8" fill="#00ff00" stroke="#00ff00" stroke-width="0.25" text-anchor="start">70</text>
<text class="t" x="1176.2" y="629.1" font-size="15.8" fill="#e2c4e2" stroke="#e2c4e2" stroke-width="0.25" text-anchor="start">70</text>
<text class="t" x="1137.3" y="606.6" font-size="15.8" fill="#00ff00" stroke="#00ff00" stroke-width="0.25" text-anchor="start">75</text>
<text class="t" x="1176.2" y="606.6" font-size="15.8" fill="#e2c4e2" stroke="#e2c4e2" stroke-width="0.25" text-anchor="start">75</text>
<text class="t" x="1137.3" y="584.1" font-size="15.8" fill="#00ff00" stroke="#00ff00" stroke-width="0.25" text-anchor="start">80</text>
<text class="t" x="1176.2" y="584.1" font-size="15.8" fill="#e2c4e2" stroke="#e2c4e2" stroke-width="0.25" text-anchor="start">80</text>
<text class="t" x="1137.3" y="561.7" font-size="15.8" fill="#00ff00" stroke="#00ff00" stroke-width="0.25" text-anchor="start">85</text>
<text class="t" x="1176.2" y="561.7" font-size="15.8" fill="#e2c4e2" stroke="#e2c4e2" stroke-width="0.25" text-anchor="start">85</text>
<text class="t" x="1137.3" y="539.2" font-size="15.8" fill="#00ff00" stroke="#00ff00" stroke-width="0.25" text-anchor="start">90</text>
<text class="t" x="1176.2" y="539.2" font-size="15.8" fill="#e2c4e2" stroke="#e2c4e2" stroke-width="0.25" text-anchor="start">90</text>
</g>
<path d="M595.4,807.8V813.5M579.99,807.8V810.6M591.35,807.8V810.6M602.70,807.8V813.5M614.06,807.8V810.6M625.41,807.8V810.6M636.77,807.8V810.6M648.12,807.8V813.5M659.48,807.8V810.6M670.83,807.8V810.6M682.19,807.8V810.6M693.54,807.8V813.5M704.90,807.8V810.6M716.25,807.8V810.6M727.61,807.8V810.6M738.96,807.8V813.5M750.32,807.8V810.6M761.67,807.8V810.6M773.03,807.8V810.6M784.38,807.8V813.5M795.74,807.8V810.6M807.09,807.8V810.6M818.45,807.8V810.6M829.80,807.8V813.5M841.16,807.8V810.6M852.51,807.8V810.6M863.87,807.8V810.6M875.22,807.8V813.5M886.58,807.8V810.6M897.93,807.8V810.6M909.29,807.8V810.6M920.64,807.8V813.5M932.00,807.8V810.6M943.35,807.8V810.6M954.71,807.8V810.6M966.06,807.8V813.5M977.42,807.8V810.6M988.77,807.8V810.6M1000.12,807.8V810.6M1011.48,807.8V813.5M1022.84,807.8V810.6M1034.19,807.8V810.6M1045.55,807.8V810.6M1056.90,807.8V813.5M1068.26,807.8V810.6M1079.61,807.8V810.6M1090.97,807.8V810.6M1102.32,807.8V813.5M1113.68,807.8V810.6" stroke="#c4c4c4" stroke-width="1.2" fill="none"/>
<text class="t" x="603.0" y="832.7" font-size="15.8" fill="#ffff00" stroke="#ffff00" stroke-width="0.42" text-anchor="middle" textLength="17.2" lengthAdjust="spacingAndGlyphs">04</text>
<text class="t" x="648.4" y="832.7" font-size="15.8" fill="#ffff00" stroke="#ffff00" stroke-width="0.42" text-anchor="middle" textLength="17.2" lengthAdjust="spacingAndGlyphs">06</text>
<text class="t" x="693.8" y="832.7" font-size="15.8" fill="#ffff00" stroke="#ffff00" stroke-width="0.42" text-anchor="middle" textLength="17.2" lengthAdjust="spacingAndGlyphs">08</text>
<text class="t" x="739.3" y="832.7" font-size="15.8" fill="#ffff00" stroke="#ffff00" stroke-width="0.42" text-anchor="middle" textLength="17.2" lengthAdjust="spacingAndGlyphs">10</text>
<text class="t" x="784.7" y="832.7" font-size="15.8" fill="#ffff00" stroke="#ffff00" stroke-width="0.42" text-anchor="middle" textLength="17.2" lengthAdjust="spacingAndGlyphs">12</text>
<text class="t" x="830.1" y="832.7" font-size="15.8" fill="#ffff00" stroke="#ffff00" stroke-width="0.42" text-anchor="middle" textLength="17.2" lengthAdjust="spacingAndGlyphs">14</text>
<text class="t" x="875.5" y="832.7" font-size="15.8" fill="#ffff00" stroke="#ffff00" stroke-width="0.42" text-anchor="middle" textLength="17.2" lengthAdjust="spacingAndGlyphs">16</text>
<text class="t" x="920.9" y="832.7" font-size="15.8" fill="#ffff00" stroke="#ffff00" stroke-width="0.42" text-anchor="middle" textLength="17.2" lengthAdjust="spacingAndGlyphs">18</text>
<text class="t" x="966.4" y="832.7" font-size="15.8" fill="#ffff00" stroke="#ffff00" stroke-width="0.42" text-anchor="middle" textLength="17.2" lengthAdjust="spacingAndGlyphs">20</text>
<text class="t" x="1011.8" y="832.7" font-size="15.8" fill="#ffff00" stroke="#ffff00" stroke-width="0.42" text-anchor="middle" textLength="17.2" lengthAdjust="spacingAndGlyphs">22</text>
<text class="t" x="1057.2" y="832.7" font-size="15.8" fill="#ffff00" stroke="#ffff00" stroke-width="0.42" text-anchor="middle" textLength="17.2" lengthAdjust="spacingAndGlyphs">00</text>
<text class="t" x="1102.6" y="832.7" font-size="15.8" fill="#ffff00" stroke="#ffff00" stroke-width="0.42" text-anchor="middle" textLength="17.2" lengthAdjust="spacingAndGlyphs">02</text>
<text class="t" x="567.0" y="832.7" font-size="16" fill="#ffff00" stroke="#ffff00" stroke-width="0.32" text-anchor="start" textLength="51.0" lengthAdjust="spacingAndGlyphs">Sunset</text>
<clipPath id="c3clip"><rect x="575" y="524.5" width="551" height="282"/></clipPath><g clip-path="url(#c3clip)">
<polyline points="575.8,696.8 581.8,696.8 581.8,698.1 595.8,698.1 595.8,699.4 609.8,699.4 609.8,700.7 621.8,700.7 621.8,702.0 633.8,702.0 633.8,703.3 643.8,703.3 643.8,704.6 655.8,704.6 655.8,705.9 667.8,705.9 667.8,707.2 679.8,707.2 679.8,708.5 699.8,708.5 699.8,709.8 761.8,709.8 761.8,711.1 817.8,711.1 817.8,709.8 909.8,709.8 909.8,711.1 955.8,711.1 955.8,712.4 1007.8,712.4 1007.8,713.7 1073.8,713.7 1073.8,715.0 1123.0,715.0" fill="none" stroke="#e2c4e2" stroke-width="3.6" stroke-linejoin="miter"/>
<polyline points="575.8,696.8 576.0,696.8 576.0,694.8 579.1,694.8 579.1,696.8 582.4,696.8 582.4,694.8 587.1,694.8 587.1,696.8 594.0,696.8 594.0,696.8 597.8,696.8 597.8,696.8 601.8,696.8 601.8,694.8 604.9,694.8 604.9,694.8 612.5,694.8 612.5,696.8 619.4,696.8 619.4,696.8 623.0,696.8 623.0,696.8 628.9,696.8 628.9,696.8 636.1,696.8 636.1,696.8 639.1,696.8 639.1,696.8 645.3,696.8 645.3,696.8 648.8,696.8 648.8,696.8 651.7,696.8 651.7,696.8 659.0,696.8 659.0,696.8 663.2,696.8 663.2,696.8 668.8,696.8 668.8,696.8 676.0,696.8 676.0,696.8 680.7,696.8 680.7,696.8 685.6,696.8 685.6,694.8 689.8,694.8 689.8,696.8 692.5,696.8 692.5,694.8 698.5,694.8 698.5,694.8 703.9,694.8 703.9,698.3 708.3,698.3 708.3,698.3 711.9,698.3 711.9,698.3 715.5,698.3 715.5,698.3 719.5,698.3 719.5,698.3 726.1,698.3 726.1,698.3 731.7,698.3 731.7,698.3 734.8,698.3 734.8,696.3 738.5,696.3 738.5,698.3 744.4,698.3 744.4,696.3 748.7,696.3 748.7,696.3 753.7,696.3 753.7,696.3 760.1,696.3 760.1,698.3 767.8,698.3 767.8,698.3 775.6,698.3 775.6,696.3 779.7,696.3 779.7,698.3 786.5,698.3 786.5,698.3 794.1,698.3 794.1,698.3 801.1,698.3 801.1,696.3 804.7,696.3 804.7,698.3 807.9,698.3 807.9,698.3 815.7,698.3 815.7,698.3 818.3,698.3 818.3,696.3 821.7,696.3 821.7,698.3 826.2,698.3 826.2,696.3 829.3,696.3 829.3,698.3 834.1,698.3 834.1,696.3 836.9,696.3 836.9,696.3 840.3,696.3 840.3,698.3 843.7,698.3 843.7,696.3 848.9,696.3 848.9,696.3 856.8,696.3 856.8,696.3 862.3,696.3 862.3,698.3 867.0,698.3 867.0,698.3 872.1,698.3 872.1,696.3 876.9,696.3 876.9,696.3 881.7,696.3 881.7,696.3 889.1,696.3 889.1,698.3 894.3,698.3 894.3,696.3 898.2,696.3 898.2,696.3 901.9,696.3 901.9,696.3 909.2,696.3 909.2,696.3 912.0,696.3 912.0,698.3 917.6,698.3 917.6,698.3 922.3,698.3 922.3,698.3 928.4,698.3 928.4,698.3 935.0,698.3 935.0,698.3 938.0,698.3 938.0,696.3 945.3,696.3 945.3,698.3 952.9,698.3 952.9,698.3 959.0,698.3 959.0,698.3 965.0,698.3 965.0,696.0 970.4,696.0 970.4,696.0 976.7,696.0 976.7,694.0 984.3,694.0 984.3,696.0 987.2,696.0 987.2,696.0 995.0,696.0 995.0,696.0 997.7,696.0 997.7,696.0 1000.9,696.0 1000.9,696.0 1007.1,696.0 1007.1,694.0 1010.5,694.0 1010.5,696.0 1016.1,696.0 1016.1,696.0 1023.7,696.0 1023.7,694.0 1026.3,694.0 1026.3,696.0 1028.8,696.0 1028.8,696.0 1032.0,696.0 1032.0,696.0 1038.8,696.0 1038.8,696.0 1044.3,696.0 1044.3,696.0 1047.9,696.0 1047.9,696.0 1052.2,696.0 1052.2,696.0 1059.0,696.0 1059.0,696.0 1064.4,696.0 1064.4,694.0 1067.1,694.0 1067.1,696.0 1072.3,696.0 1072.3,696.0 1078.1,696.0 1078.1,694.0 1082.6,694.0 1082.6,696.0 1088.0,696.0 1088.0,694.0 1095.1,694.0 1095.1,696.0 1098.0,696.0 1098.0,696.0 1102.6,696.0 1102.6,696.0 1106.9,696.0 1106.9,694.0 1112.0,694.0 1112.0,696.0 1115.1,696.0 1115.1,694.0 1121.0,694.0 1121.0,696.0 1123.0,696.0" fill="none" stroke="#9acd32" stroke-width="4.6" stroke-linejoin="miter"/>
<polyline points="575.8,568.5 577.4,568.5 577.4,565.8 578.2,565.8 578.2,568.5 579.8,568.5 579.8,571.2 581.4,571.2 581.4,568.5 582.2,568.5 582.2,571.2 583.8,571.2 583.8,568.5 585.4,568.5 585.4,571.2 587.8,571.2 587.8,568.5 590.2,568.5 590.2,571.2 593.4,571.2 593.4,568.5 594.2,568.5 594.2,571.2 595.0,571.2 595.0,568.5 596.6,568.5 596.6,571.2 600.6,571.2 600.6,573.9 602.2,573.9 602.2,576.6 603.8,576.6 603.8,579.4 605.4,579.4 605.4,576.6 606.2,576.6 606.2,579.4 607.8,579.4 607.8,576.6 608.6,576.6 608.6,579.4 610.2,579.4 610.2,576.6 611.0,576.6 611.0,579.4 611.8,579.4 611.8,576.6 612.6,576.6 612.6,579.4 614.2,579.4 614.2,576.6 616.6,576.6 616.6,579.4 617.4,579.4 617.4,576.6 618.2,576.6 618.2,579.4 619.8,579.4 619.8,582.1 622.2,582.1 622.2,584.8 623.0,584.8 623.0,582.1 623.8,582.1 623.8,584.8 626.2,584.8 626.2,587.5 627.0,587.5 627.0,584.8 627.8,584.8 627.8,587.5 630.2,587.5 630.2,590.2 631.0,590.2 631.0,593.0 632.6,593.0 632.6,590.2 633.4,590.2 633.4,593.0 639.8,593.0 639.8,595.7 640.6,595.7 640.6,593.0 642.2,593.0 642.2,595.7 643.0,595.7 643.0,593.0 645.4,593.0 645.4,595.7 646.2,595.7 646.2,593.0 647.8,593.0 647.8,595.7 648.6,595.7 648.6,593.0 655.0,593.0 655.0,595.7 655.8,595.7 655.8,593.0 656.6,593.0 656.6,595.7 658.2,595.7 658.2,593.0 663.0,593.0 663.0,595.7 663.8,595.7 663.8,593.0 665.4,593.0 665.4,595.7 666.2,595.7 666.2,593.0 668.6,593.0 668.6,595.7 669.4,595.7 669.4,593.0 671.0,593.0 671.0,595.7 671.8,595.7 671.8,593.0 672.6,593.0 672.6,595.7 675.0,595.7 675.0,593.0 678.2,593.0 678.2,595.7 679.8,595.7 679.8,593.0 681.4,593.0 681.4,595.7 682.2,595.7 682.2,593.0 683.8,593.0 683.8,595.7 685.4,595.7 685.4,593.0 687.0,593.0 687.0,595.7 688.6,595.7 688.6,593.0 689.4,593.0 689.4,595.7 690.2,595.7 690.2,593.0 691.0,593.0 691.0,595.7 694.2,595.7 694.2,593.0 695.8,593.0 695.8,595.7 699.0,595.7 699.0,598.4 699.8,598.4 699.8,595.7 700.6,595.7 700.6,593.0 701.4,593.0 701.4,595.7 703.0,595.7 703.0,598.4 704.6,598.4 704.6,595.7 705.4,595.7 705.4,598.4 706.2,598.4 706.2,601.1 707.0,601.1 707.0,598.4 707.8,598.4 707.8,601.1 708.6,601.1 708.6,598.4 709.4,598.4 709.4,603.8 711.0,603.8 711.0,601.1 712.6,601.1 712.6,603.8 714.2,603.8 714.2,601.1 715.0,601.1 715.0,603.8 716.6,603.8 716.6,601.1 717.4,601.1 717.4,603.8 719.0,603.8 719.0,601.1 719.8,601.1 719.8,603.8 723.0,603.8 723.0,601.1 723.8,601.1 723.8,603.8 725.4,603.8 725.4,606.6 726.2,606.6 726.2,603.8 727.0,603.8 727.0,606.6 730.2,606.6 730.2,603.8 731.0,603.8 731.0,606.6 735.8,606.6 735.8,609.3 739.0,609.3 739.0,612.0 740.6,612.0 740.6,609.3 741.4,609.3 741.4,614.7 742.2,614.7 742.2,612.0 743.0,612.0 743.0,614.7 743.8,614.7 743.8,612.0 744.6,612.0 744.6,617.4 745.4,617.4 745.4,614.7 746.2,614.7 746.2,617.4 748.6,617.4 748.6,614.7 751.0,614.7 751.0,617.4 751.8,617.4 751.8,614.7 755.0,614.7 755.0,617.4 755.8,617.4 755.8,620.2 756.6,620.2 756.6,614.7 757.4,614.7 757.4,617.4 759.8,617.4 759.8,614.7 760.6,614.7 760.6,617.4 761.4,617.4 761.4,614.7 763.0,614.7 763.0,617.4 763.8,617.4 763.8,614.7 764.6,614.7 764.6,617.4 765.4,617.4 765.4,620.2 766.2,620.2 766.2,614.7 767.0,614.7 767.0,617.4 767.8,617.4 767.8,620.2 768.6,620.2 768.6,617.4 769.4,617.4 769.4,620.2 770.2,620.2 770.2,622.9 772.6,622.9 772.6,620.2 773.4,620.2 773.4,622.9 775.0,622.9 775.0,625.6 775.8,625.6 775.8,628.3 776.6,628.3 776.6,625.6 777.4,625.6 777.4,628.3 779.0,628.3 779.0,625.6 779.8,625.6 779.8,628.3 781.4,628.3 781.4,622.9 783.8,622.9 783.8,625.6 785.4,625.6 785.4,622.9 786.2,622.9 786.2,625.6 787.8,625.6 787.8,622.9 789.4,622.9 789.4,625.6 795.8,625.6 795.8,628.3 797.4,628.3 797.4,631.0 798.2,631.0 798.2,633.8 799.0,633.8 799.0,631.0 799.8,631.0 799.8,633.8 801.4,633.8 801.4,636.5 803.0,636.5 803.0,639.2 808.6,639.2 808.6,641.9 810.2,641.9 810.2,644.6 811.0,644.6 811.0,641.9 811.8,641.9 811.8,647.4 812.6,647.4 812.6,644.6 813.4,644.6 813.4,641.9 814.2,641.9 814.2,647.4 815.0,647.4 815.0,644.6 816.6,644.6 816.6,641.9 818.2,641.9 818.2,647.4 819.0,647.4 819.0,641.9 822.2,641.9 822.2,647.4 823.8,647.4 823.8,644.6 825.4,644.6 825.4,647.4 826.2,647.4 826.2,644.6 827.0,644.6 827.0,641.9 827.8,641.9 827.8,644.6 833.4,644.6 833.4,647.4 834.2,647.4 834.2,644.6 835.8,644.6 835.8,647.4 836.6,647.4 836.6,644.6 837.4,644.6 837.4,647.4 838.2,647.4 838.2,650.1 839.0,650.1 839.0,647.4 839.8,647.4 839.8,650.1 841.4,650.1 841.4,647.4 843.0,647.4 843.0,650.1 844.6,650.1 844.6,647.4 845.4,647.4 845.4,650.1 849.4,650.1 849.4,652.8 850.2,652.8 850.2,647.4 851.8,647.4 851.8,652.8 852.6,652.8 852.6,650.1 853.4,650.1 853.4,647.4 855.8,647.4 855.8,650.1 856.6,650.1 856.6,652.8 857.4,652.8 857.4,647.4 859.0,647.4 859.0,650.1 860.6,650.1 860.6,652.8 863.0,652.8 863.0,650.1 864.6,650.1 864.6,647.4 865.4,647.4 865.4,652.8 866.2,652.8 866.2,650.1 868.6,650.1 868.6,652.8 869.4,652.8 869.4,650.1 871.0,650.1 871.0,647.4 871.8,647.4 871.8,641.9 873.4,641.9 873.4,644.6 874.2,644.6 874.2,641.9 875.8,641.9 875.8,636.5 878.2,636.5 878.2,633.8 880.6,633.8 880.6,628.3 881.4,628.3 881.4,625.6 882.2,625.6 882.2,628.3 883.0,628.3 883.0,622.9 883.8,622.9 883.8,620.2 884.6,620.2 884.6,622.9 885.4,622.9 885.4,617.4 887.8,617.4 887.8,614.7 888.6,614.7 888.6,617.4 889.4,617.4 889.4,620.2 890.2,620.2 890.2,617.4 891.0,617.4 891.0,620.2 891.8,620.2 891.8,614.7 893.4,614.7 893.4,612.0 895.0,612.0 895.0,606.6 896.6,606.6 896.6,603.8 898.2,603.8 898.2,601.1 900.6,601.1 900.6,598.4 902.2,598.4 902.2,601.1 903.0,601.1 903.0,598.4 906.2,598.4 906.2,601.1 907.0,601.1 907.0,598.4 908.6,598.4 908.6,601.1 909.4,601.1 909.4,598.4 915.8,598.4 915.8,601.1 917.4,601.1 917.4,603.8 918.2,603.8 918.2,601.1 919.8,601.1 919.8,603.8 923.8,603.8 923.8,606.6 924.6,606.6 924.6,609.3 925.4,609.3 925.4,606.6 927.8,606.6 927.8,609.3 929.4,609.3 929.4,606.6 930.2,606.6 930.2,609.3 933.4,609.3 933.4,612.0 935.0,612.0 935.0,609.3 935.8,609.3 935.8,612.0 937.4,612.0 937.4,609.3 938.2,609.3 938.2,612.0 939.8,612.0 939.8,614.7 940.6,614.7 940.6,612.0 943.0,612.0 943.0,614.7 943.8,614.7 943.8,612.0 945.4,612.0 945.4,614.7 946.2,614.7 946.2,612.0 949.4,612.0 949.4,614.7 950.2,614.7 950.2,612.0 955.0,612.0 955.0,609.3 955.8,609.3 955.8,612.0 960.6,612.0 960.6,609.3 961.4,609.3 961.4,612.0 963.8,612.0 963.8,609.3 964.6,609.3 964.6,612.0 967.0,612.0 967.0,609.3 970.2,609.3 970.2,612.0 973.4,612.0 973.4,609.3 975.8,609.3 975.8,606.6 977.4,606.6 977.4,609.3 978.2,609.3 978.2,606.6 979.0,606.6 979.0,609.3 980.6,609.3 980.6,606.6 981.4,606.6 981.4,609.3 982.2,609.3 982.2,606.6 983.0,606.6 983.0,609.3 985.4,609.3 985.4,606.6 986.2,606.6 986.2,609.3 999.8,609.3 999.8,612.0 1001.4,612.0 1001.4,609.3 1003.0,609.3 1003.0,612.0 1004.6,612.0 1004.6,609.3 1005.4,609.3 1005.4,612.0 1009.4,612.0 1009.4,609.3 1011.0,609.3 1011.0,612.0 1011.8,612.0 1011.8,609.3 1012.6,609.3 1012.6,612.0 1015.0,612.0 1015.0,609.3 1017.4,609.3 1017.4,606.6 1018.2,606.6 1018.2,603.8 1019.0,603.8 1019.0,612.0 1019.8,612.0 1019.8,614.7 1020.6,614.7 1020.6,609.3 1023.0,609.3 1023.0,612.0 1028.6,612.0 1028.6,614.7 1030.2,614.7 1030.2,612.0 1031.0,612.0 1031.0,614.7 1031.8,614.7 1031.8,612.0 1032.6,612.0 1032.6,614.7 1033.4,614.7 1033.4,612.0 1035.0,612.0 1035.0,614.7 1037.4,614.7 1037.4,612.0 1039.0,612.0 1039.0,614.7 1041.4,614.7 1041.4,612.0 1042.2,612.0 1042.2,614.7 1049.4,614.7 1049.4,617.4 1050.2,617.4 1050.2,614.7 1051.0,614.7 1051.0,617.4 1052.6,617.4 1052.6,614.7 1053.4,614.7 1053.4,617.4 1055.8,617.4 1055.8,620.2 1063.8,620.2 1063.8,622.9 1064.6,622.9 1064.6,620.2 1070.2,620.2 1070.2,622.9 1071.0,622.9 1071.0,620.2 1072.6,620.2 1072.6,622.9 1073.4,622.9 1073.4,620.2 1075.0,620.2 1075.0,622.9 1075.8,622.9 1075.8,620.2 1076.6,620.2 1076.6,622.9 1077.4,622.9 1077.4,620.2 1079.8,620.2 1079.8,622.9 1080.6,622.9 1080.6,620.2 1082.2,620.2 1082.2,622.9 1085.4,622.9 1085.4,620.2 1086.2,620.2 1086.2,622.9 1087.0,622.9 1087.0,620.2 1088.6,620.2 1088.6,622.9 1090.2,622.9 1090.2,620.2 1091.0,620.2 1091.0,622.9 1091.8,622.9 1091.8,620.2 1092.6,620.2 1092.6,622.9 1093.4,622.9 1093.4,620.2 1094.2,620.2 1094.2,622.9 1095.8,622.9 1095.8,620.2 1097.4,620.2 1097.4,622.9 1098.2,622.9 1098.2,620.2 1099.0,620.2 1099.0,622.9 1111.0,622.9 1111.0,620.2 1111.8,620.2 1111.8,622.9 1112.6,622.9 1112.6,625.6 1114.2,625.6 1114.2,622.9 1115.0,622.9 1115.0,625.6 1116.6,625.6 1116.6,622.9 1118.2,622.9 1118.2,625.6 1119.0,625.6 1119.0,622.9 1119.8,622.9 1119.8,625.6 1122.0,625.6" fill="none" stroke="#0000ff" stroke-width="1.9" stroke-linejoin="miter"/>
<polyline points="575.8,763.2 577.1,763.2 577.1,764.1 582.3,764.1 582.3,765.0 587.5,765.0 587.5,765.9 590.1,765.9 590.1,766.8 594.0,766.8 594.0,767.7 597.9,767.7 597.9,768.6 601.8,768.6 601.8,769.5 604.4,769.5 604.4,770.4 605.7,770.4 605.7,771.3 607.0,771.3 607.0,772.2 608.3,772.2 608.3,774.0 609.6,774.0 609.6,774.9 614.8,774.9 614.8,775.8 621.3,775.8 621.3,776.7 623.9,776.7 623.9,777.6 630.4,777.6 630.4,778.5 633.0,778.5 633.0,777.6 634.3,777.6 634.3,778.5 636.9,778.5 636.9,777.6 638.2,777.6 638.2,778.5 639.5,778.5 639.5,777.6 640.8,777.6 640.8,778.5 643.4,778.5 643.4,777.6 644.7,777.6 644.7,778.5 646.0,778.5 646.0,777.6 648.6,777.6 648.6,778.5 649.9,778.5 649.9,777.6 652.5,777.6 652.5,778.5 655.1,778.5 655.1,777.6 657.7,777.6 657.7,776.7 659.0,776.7 659.0,775.8 662.9,775.8 662.9,774.9 665.5,774.9 665.5,775.8 666.8,775.8 666.8,776.7 668.1,776.7 668.1,778.5 669.4,778.5 669.4,777.6 670.7,777.6 670.7,778.5 672.0,778.5 672.0,779.4 698.0,779.4 698.0,778.5 700.6,778.5 700.6,777.6 704.5,777.6 704.5,776.7 708.4,776.7 708.4,775.8 712.3,775.8 712.3,774.9 713.6,774.9 713.6,774.0 717.5,774.0 717.5,773.1 720.1,773.1 720.1,772.2 722.7,772.2 722.7,771.3 727.9,771.3 727.9,770.4 729.2,770.4 729.2,769.5 731.8,769.5 731.8,768.6 737.0,768.6 737.0,767.7 738.3,767.7 738.3,766.8 740.9,766.8 740.9,765.9 743.5,765.9 743.5,766.8 744.8,766.8 744.8,765.9 747.4,765.9 747.4,765.0 748.7,765.0 748.7,765.9 750.0,765.9 750.0,765.0 752.6,765.0 752.6,764.1 753.9,764.1 753.9,765.0 755.2,765.0 755.2,764.1 760.4,764.1 760.4,763.2 763.0,763.2 763.0,762.3 769.5,762.3 769.5,761.4 772.1,761.4 772.1,760.5 773.4,760.5 773.4,759.6 776.0,759.6 776.0,758.7 778.6,758.7 778.6,757.8 781.2,757.8 781.2,756.9 783.8,756.9 783.8,755.1 787.7,755.1 787.7,754.2 790.3,754.2 790.3,752.4 792.9,752.4 792.9,751.5 794.2,751.5 794.2,750.6 796.8,750.6 796.8,749.7 798.1,749.7 798.1,748.8 804.6,748.8 804.6,747.9 805.9,747.9 805.9,748.8 808.5,748.8 808.5,747.9 811.1,747.9 811.1,747.0 812.4,747.0 812.4,747.9 813.7,747.9 813.7,747.0 818.9,747.0 818.9,746.1 825.4,746.1 825.4,745.2 829.3,745.2 829.3,744.3 830.6,744.3 830.6,745.2 834.5,745.2 834.5,744.3 837.1,744.3 837.1,743.4 838.4,743.4 838.4,744.3 839.7,744.3 839.7,743.4 843.6,743.4 843.6,742.5 861.8,742.5 861.8,743.4 863.1,743.4 863.1,742.5 869.6,742.5 869.6,743.4 874.8,743.4 874.8,744.3 877.4,744.3 877.4,745.2 878.7,745.2 878.7,746.1 882.6,746.1 882.6,747.0 887.8,747.0 887.8,747.9 889.1,747.9 889.1,748.8 890.4,748.8 890.4,747.9 891.7,747.9 891.7,748.8 896.9,748.8 896.9,749.7 899.5,749.7 899.5,750.6 904.7,750.6 904.7,751.5 907.3,751.5 907.3,750.6 911.2,750.6 911.2,749.7 915.1,749.7 915.1,748.8 916.4,748.8 916.4,747.9 917.7,747.9 917.7,748.8 919.0,748.8 919.0,747.9 921.6,747.9 921.6,748.8 922.9,748.8 922.9,747.9 924.2,747.9 924.2,748.8 950.2,748.8 950.2,747.9 951.5,747.9 951.5,748.8 952.8,748.8 952.8,747.9 954.1,747.9 954.1,748.8 955.4,748.8 955.4,747.9 956.7,747.9 956.7,748.8 958.0,748.8 958.0,747.9 959.3,747.9 959.3,748.8 964.5,748.8 964.5,747.9 971.0,747.9 971.0,748.8 972.3,748.8 972.3,747.9 973.6,747.9 973.6,748.8 976.2,748.8 976.2,747.9 977.5,747.9 977.5,748.8 978.8,748.8 978.8,747.9 980.1,747.9 980.1,748.8 989.2,748.8 989.2,747.9 990.5,747.9 990.5,748.8 995.7,748.8 995.7,747.9 1000.9,747.9 1000.9,747.0 1006.1,747.0 1006.1,746.1 1007.4,746.1 1007.4,747.0 1010.0,747.0 1010.0,746.1 1012.6,746.1 1012.6,747.0 1015.2,747.0 1015.2,748.8 1016.5,748.8 1016.5,749.7 1017.8,749.7 1017.8,751.5 1021.7,751.5 1021.7,752.4 1024.3,752.4 1024.3,753.3 1025.6,753.3 1025.6,752.4 1026.9,752.4 1026.9,751.5 1034.7,751.5 1034.7,750.6 1038.6,750.6 1038.6,751.5 1039.9,751.5 1039.9,750.6 1055.5,750.6 1055.5,751.5 1056.8,751.5 1056.8,750.6 1058.1,750.6 1058.1,751.5 1060.7,751.5 1060.7,752.4 1063.3,752.4 1063.3,751.5 1064.6,751.5 1064.6,752.4 1065.9,752.4 1065.9,751.5 1067.2,751.5 1067.2,752.4 1069.8,752.4 1069.8,751.5 1071.1,751.5 1071.1,752.4 1073.7,752.4 1073.7,751.5 1077.6,751.5 1077.6,752.4 1080.2,752.4 1080.2,751.5 1082.8,751.5 1082.8,752.4 1084.1,752.4 1084.1,753.3 1086.7,753.3 1086.7,754.2 1089.3,754.2 1089.3,755.1 1094.5,755.1 1094.5,756.0 1102.3,756.0 1102.3,756.9 1103.6,756.9 1103.6,756.0 1104.9,756.0 1104.9,756.9 1114.0,756.9 1114.0,756.0 1115.3,756.0 1115.3,756.9 1116.6,756.9 1116.6,756.0 1117.9,756.0 1117.9,756.9 1119.2,756.9 1119.2,756.0 1122.6,756.0" fill="none" stroke="#00ff00" stroke-width="1.7" stroke-linejoin="miter"/>
<polyline points="575.8,786.6 578.2,786.6 578.2,784.8 579.4,784.8 579.4,787.5 581.8,787.5 581.8,788.4 583.0,788.4 583.0,790.2 584.2,790.2 584.2,788.4 585.4,788.4 585.4,789.3 587.8,789.3 587.8,790.2 591.4,790.2 591.4,791.1 592.6,791.1 592.6,790.2 596.2,790.2 596.2,791.1 598.6,791.1 598.6,792.9 599.8,792.9 599.8,792.0 602.2,792.0 602.2,792.9 603.4,792.9 603.4,795.6 604.6,795.6 604.6,794.7 605.8,794.7 605.8,797.4 607.0,797.4 607.0,799.2 608.2,799.2 608.2,801.0 610.6,801.0 610.6,802.8 611.8,802.8 611.8,803.7 613.0,803.7 613.0,804.6 614.2,804.6 614.2,805.5 615.4,805.5 615.4,804.6 616.6,804.6 616.6,803.7 619.0,803.7 619.0,806.4 620.2,806.4 620.2,805.5 621.4,805.5 621.4,804.6 622.6,804.6 622.6,806.4 626.2,806.4 626.2,807.3 627.4,807.3 627.4,806.4 628.6,806.4 628.6,807.3 629.8,807.3 629.8,809.1 631.0,809.1 631.0,807.3 632.2,807.3 632.2,809.1 633.4,809.1 633.4,808.2 634.6,808.2 634.6,810.0 635.8,810.0 635.8,810.9 637.0,810.9 637.0,811.8 646.6,811.8 646.6,812.7 650.2,812.7 650.2,811.8 653.8,811.8 653.8,812.7 658.6,812.7 658.6,813.6 661.0,813.6 661.0,812.7 664.6,812.7 664.6,813.6 665.8,813.6 665.8,814.5 667.0,814.5 667.0,812.7 668.2,812.7 668.2,813.6 669.4,813.6 669.4,812.7 671.8,812.7 671.8,814.5 673.0,814.5 673.0,813.6 674.2,813.6 674.2,812.7 675.4,812.7 675.4,813.6 681.4,813.6 681.4,814.5 682.6,814.5 682.6,813.6 687.4,813.6 687.4,814.5 689.8,814.5 689.8,815.4 691.0,815.4 691.0,814.5 692.2,814.5 692.2,815.4 694.6,815.4 694.6,813.6 697.0,813.6 697.0,814.5 699.4,814.5 699.4,815.4 701.8,815.4 701.8,814.5 703.0,814.5 703.0,816.3 704.2,816.3 704.2,813.6 705.4,813.6 705.4,815.4 706.6,815.4 706.6,814.5 707.8,814.5 707.8,815.4 709.0,815.4 709.0,813.6 710.2,813.6 710.2,815.4 713.8,815.4 713.8,814.5 716.2,814.5 716.2,815.4 717.4,815.4 717.4,814.5 718.6,814.5 718.6,813.6 719.8,813.6 719.8,814.5 723.4,814.5 723.4,813.6 725.8,813.6 725.8,814.5 728.2,814.5 728.2,813.6 729.4,813.6 729.4,814.5 736.6,814.5 736.6,813.6 739.0,813.6 739.0,814.5 740.2,814.5 740.2,813.6 741.4,813.6 741.4,814.5 745.0,814.5 745.0,813.6 749.8,813.6 749.8,815.4 751.0,815.4 751.0,814.5 752.2,814.5 752.2,813.6 753.4,813.6 753.4,814.5 754.6,814.5 754.6,813.6 758.2,813.6 758.2,814.5 760.6,814.5 760.6,812.7 761.8,812.7 761.8,814.5 767.8,814.5 767.8,813.6 771.4,813.6 771.4,814.5 772.6,814.5 772.6,813.6 773.8,813.6 773.8,814.5 776.2,814.5 776.2,813.6 778.6,813.6 778.6,814.5 781.0,814.5 781.0,812.7 782.2,812.7 782.2,814.5 783.4,814.5 783.4,812.7 784.6,812.7 784.6,813.6 785.8,813.6 785.8,814.5 788.2,814.5 788.2,812.7 790.6,812.7 790.6,813.6 794.2,813.6 794.2,814.5 795.4,814.5 795.4,813.6 799.0,813.6 799.0,812.7 803.8,812.7 803.8,813.6 805.0,813.6 805.0,812.7 806.2,812.7 806.2,811.8 807.4,811.8 807.4,813.6 808.6,813.6 808.6,812.7 811.0,812.7 811.0,811.8 812.2,811.8 812.2,813.6 813.4,813.6 813.4,812.7 815.8,812.7 815.8,813.6 817.0,813.6 817.0,812.7 819.4,812.7 819.4,813.6 820.6,813.6 820.6,812.7 823.0,812.7 823.0,813.6 825.4,813.6 825.4,812.7 826.6,812.7 826.6,811.8 827.8,811.8 827.8,813.6 829.0,813.6 829.0,812.7 830.2,812.7 830.2,813.6 831.4,813.6 831.4,812.7 835.0,812.7 835.0,811.8 836.2,811.8 836.2,812.7 838.6,812.7 838.6,813.6 841.0,813.6 841.0,812.7 842.2,812.7 842.2,811.8 843.4,811.8 843.4,812.7 845.8,812.7 845.8,811.8 848.2,811.8 848.2,812.7 851.8,812.7 851.8,810.9 853.0,810.9 853.0,812.7 856.6,812.7 856.6,811.8 857.8,811.8 857.8,810.9 859.0,810.9 859.0,812.7 861.4,812.7 861.4,811.8 862.6,811.8 862.6,810.0 866.2,810.0 866.2,809.1 867.4,809.1 867.4,808.2 868.6,808.2 868.6,806.4 869.8,806.4 869.8,805.5 871.0,805.5 871.0,804.6 872.2,804.6 872.2,803.7 874.6,803.7 874.6,801.9 875.8,801.9 875.8,802.8 877.0,802.8 877.0,801.0 878.2,801.0 878.2,800.1 879.4,800.1 879.4,799.2 880.6,799.2 880.6,798.3 884.2,798.3 884.2,796.5 885.4,796.5 885.4,795.6 887.8,795.6 887.8,794.7 889.0,794.7 889.0,795.6 890.2,795.6 890.2,793.8 891.4,793.8 891.4,792.9 892.6,792.9 892.6,793.8 896.2,793.8 896.2,792.9 897.4,792.9 897.4,792.0 898.6,792.0 898.6,792.9 899.8,792.9 899.8,792.0 901.0,792.0 901.0,791.1 905.8,791.1 905.8,790.2 907.0,790.2 907.0,788.4 911.8,788.4 911.8,789.3 913.0,789.3 913.0,787.5 914.2,787.5 914.2,788.4 915.4,788.4 915.4,787.5 916.6,787.5 916.6,788.4 919.0,788.4 919.0,789.3 921.4,789.3 921.4,790.2 922.6,790.2 922.6,791.1 925.0,791.1 925.0,792.0 926.2,792.0 926.2,791.1 928.6,791.1 928.6,792.9 929.8,792.9 929.8,792.0 932.2,792.0 932.2,792.9 934.6,792.9 934.6,792.0 935.8,792.0 935.8,793.8 938.2,793.8 938.2,794.7 939.4,794.7 939.4,793.8 940.6,793.8 940.6,795.6 941.8,795.6 941.8,793.8 944.2,793.8 944.2,794.7 945.4,794.7 945.4,795.6 949.0,795.6 949.0,794.7 953.8,794.7 953.8,796.5 955.0,796.5 955.0,794.7 956.2,794.7 956.2,795.6 958.6,795.6 958.6,794.7 959.8,794.7 959.8,795.6 961.0,795.6 961.0,794.7 963.4,794.7 963.4,795.6 964.6,795.6 964.6,794.7 965.8,794.7 965.8,795.6 967.0,795.6 967.0,794.7 969.4,794.7 969.4,795.6 970.6,795.6 970.6,793.8 971.8,793.8 971.8,795.6 973.0,795.6 973.0,792.9 974.2,792.9 974.2,793.8 976.6,793.8 976.6,794.7 977.8,794.7 977.8,792.9 979.0,792.9 979.0,794.7 980.2,794.7 980.2,793.8 981.4,793.8 981.4,792.9 982.6,792.9 982.6,792.0 985.0,792.0 985.0,792.9 986.2,792.9 986.2,792.0 988.6,792.0 988.6,792.9 989.8,792.9 989.8,792.0 992.2,792.0 992.2,791.1 994.6,791.1 994.6,792.0 995.8,792.0 995.8,792.9 997.0,792.9 997.0,791.1 1003.0,791.1 1003.0,792.0 1004.2,792.0 1004.2,791.1 1005.4,791.1 1005.4,792.0 1011.4,792.0 1011.4,791.1 1012.6,791.1 1012.6,792.9 1013.8,792.9 1013.8,792.0 1015.0,792.0 1015.0,793.8 1017.4,793.8 1017.4,795.6 1018.6,795.6 1018.6,796.5 1019.8,796.5 1019.8,798.3 1021.0,798.3 1021.0,797.4 1022.2,797.4 1022.2,798.3 1024.6,798.3 1024.6,797.4 1025.8,797.4 1025.8,798.3 1031.8,798.3 1031.8,799.2 1033.0,799.2 1033.0,798.3 1035.4,798.3 1035.4,799.2 1036.6,799.2 1036.6,798.3 1037.8,798.3 1037.8,799.2 1040.2,799.2 1040.2,798.3 1041.4,798.3 1041.4,799.2 1042.6,799.2 1042.6,798.3 1043.8,798.3 1043.8,800.1 1045.0,800.1 1045.0,798.3 1048.6,798.3 1048.6,799.2 1049.8,799.2 1049.8,798.3 1052.2,798.3 1052.2,800.1 1057.0,800.1 1057.0,801.0 1058.2,801.0 1058.2,800.1 1059.4,800.1 1059.4,801.9 1060.6,801.9 1060.6,801.0 1061.8,801.0 1061.8,802.8 1063.0,802.8 1063.0,801.9 1064.2,801.9 1064.2,803.7 1065.4,803.7 1065.4,801.9 1066.6,801.9 1066.6,803.7 1067.8,803.7 1067.8,801.9 1069.0,801.9 1069.0,802.8 1071.4,802.8 1071.4,804.6 1072.6,804.6 1072.6,803.7 1073.8,803.7 1073.8,804.6 1076.2,804.6 1076.2,803.7 1079.8,803.7 1079.8,804.6 1081.0,804.6 1081.0,805.5 1082.2,805.5 1082.2,804.6 1084.6,804.6 1084.6,805.5 1087.0,805.5 1087.0,804.6 1088.2,804.6 1088.2,806.4 1089.4,806.4 1089.4,805.5 1093.0,805.5 1093.0,806.4 1094.2,806.4 1094.2,807.3 1095.4,807.3 1095.4,806.4 1096.6,806.4 1096.6,807.3 1097.8,807.3 1097.8,808.2 1099.0,808.2 1099.0,807.3 1100.2,807.3 1100.2,808.2 1105.0,808.2 1105.0,809.1 1107.4,809.1 1107.4,808.2 1108.6,808.2 1108.6,809.1 1111.0,809.1 1111.0,810.0 1113.4,810.0 1113.4,809.1 1114.6,809.1 1114.6,810.0 1115.8,810.0 1115.8,809.1 1117.0,809.1 1117.0,810.0 1118.2,810.0 1118.2,809.1 1120.6,809.1 1120.6,810.0 1121.8,810.0 1121.8,810.9 1122.0,810.9" fill="none" stroke="#ff00ff" stroke-width="1.8" stroke-linejoin="miter"/>
<path d="M577,800.8H1121.3" stroke="#ff0000" stroke-width="3.9" stroke-linecap="round"/>
<path d="M595.4,776V806M847.4,777V806" stroke="#fff" stroke-width="1.1"/>
</g>
<text class="a" x="505.5" y="512.5" font-size="12" fill="#ff0000" stroke="#ff0000" stroke-width="0.12" text-anchor="start" textLength="40.8" lengthAdjust="spacingAndGlyphs">Rainfall</text>
<text class="a" x="561.2" y="509.0" font-size="12" fill="#ff0000" stroke="#ff0000" stroke-width="0.12" text-anchor="start" textLength="41.2" lengthAdjust="spacingAndGlyphs">0.00 in.</text>
<text class="a" x="606.2" y="508.0" font-size="13" fill="#0000ff" stroke="#0000ff" stroke-width="0.12" text-anchor="start" textLength="50.0" lengthAdjust="spacingAndGlyphs">Humidity</text>
<text class="a" x="681.2" y="505.8" font-size="13" fill="#0000ff" stroke="#0000ff" stroke-width="0.12" text-anchor="start" textLength="28.8" lengthAdjust="spacingAndGlyphs">64 %</text>
<text class="a" x="606.2" y="518.2" font-size="13" fill="#9acd32" stroke="#9acd32" stroke-width="0.12" text-anchor="start" textLength="63.8" lengthAdjust="spacingAndGlyphs">Indoor hum</text>
<text class="a" x="681.2" y="518.2" font-size="13" fill="#9acd32" stroke="#9acd32" stroke-width="0.12" text-anchor="start" textLength="25.8" lengthAdjust="spacingAndGlyphs">39%</text>
<text class="a" x="951.8" y="507.2" font-size="12" fill="#00e800" stroke="#00e800" stroke-width="0.12" text-anchor="start" textLength="70.8" lengthAdjust="spacingAndGlyphs">Temperature</text>
<text class="a" x="1055.0" y="505.0" font-size="12" fill="#00e800" stroke="#00e800" stroke-width="0.12" text-anchor="start" textLength="40.0" lengthAdjust="spacingAndGlyphs">39.9 °F</text>
<text class="a" x="951.8" y="520.8" font-size="12" fill="#e2c4e2" stroke="#e2c4e2" stroke-width="0.12" text-anchor="start" textLength="69.0" lengthAdjust="spacingAndGlyphs">Indoor temp</text>
<text class="a" x="1055.0" y="518.0" font-size="12" fill="#e2c4e2" stroke="#e2c4e2" stroke-width="0.12" text-anchor="start" textLength="40.0" lengthAdjust="spacingAndGlyphs">49.0 °F</text>
<text class="a" x="1095.5" y="515.5" font-size="13" fill="#ff00ff" stroke="#ff00ff" stroke-width="0.12" text-anchor="start" textLength="55.8" lengthAdjust="spacingAndGlyphs">Dew Point</text>
<text class="a" x="1166.2" y="514.5" font-size="13" fill="#ff00ff" stroke="#ff00ff" stroke-width="0.12" text-anchor="start" textLength="23.2" lengthAdjust="spacingAndGlyphs">28.7</text>
</g>
<g id="labels">
<text class="t" x="16.0" y="47.6" font-size="15" fill="#ffff00" stroke="#ffff00" stroke-width="0.15" textLength="273.0" lengthAdjust="spacingAndGlyphs">Current Conditions, WD 10.37Mac409</text>
<text class="t" x="4.0" y="65.0" font-size="16.4" fill="#ffffff" stroke="#ffffff" stroke-width="0.4" textLength="59.3" lengthAdjust="spacingAndGlyphs">Average</text>
<text class="t" x="4.0" y="81.8" font-size="16.4" fill="#ffffff" stroke="#ffffff" stroke-width="0.4" textLength="87.5" lengthAdjust="spacingAndGlyphs">Wind Speed</text>
<text class="t" x="2.5" y="97.3" font-size="16.4" fill="#ffffff" stroke="#ffffff" stroke-width="0.4" textLength="55.5" lengthAdjust="spacingAndGlyphs">Current</text>
<text class="t" x="2.5" y="114.8" font-size="16.4" fill="#ffffff" stroke="#ffffff" stroke-width="0.4" textLength="87.5" lengthAdjust="spacingAndGlyphs">Wind Speed</text>
<text class="t" x="3.5" y="135.3" font-size="15.0" fill="#ffffff" stroke="#ffffff" stroke-width="0.4" textLength="91.6" lengthAdjust="spacingAndGlyphs">Temperature</text>
<text class="t" x="3.5" y="164.0" font-size="15.0" fill="#ffffff" stroke="#ffffff" stroke-width="0.4" textLength="77.5" lengthAdjust="spacingAndGlyphs">Temp Rate</text>
<text class="t" x="5.0" y="193.9" font-size="15.0" fill="#ffffff" stroke="#ffffff" stroke-width="0.4" textLength="76.0" lengthAdjust="spacingAndGlyphs">Barometer</text>
<text class="t" x="4.0" y="220.0" font-size="15.0" fill="#ffffff" stroke="#ffffff" stroke-width="0.4" textLength="63.0" lengthAdjust="spacingAndGlyphs">Pressure</text>
<text class="t" x="4.0" y="238.2" font-size="15.0" fill="#ffffff" stroke="#ffffff" stroke-width="0.4" textLength="33.7" lengthAdjust="spacingAndGlyphs">Rate</text>
<text class="t" x="4.0" y="263.3" font-size="15.0" fill="#ffffff" stroke="#ffffff" stroke-width="0.4" textLength="65.1" lengthAdjust="spacingAndGlyphs">Humidity</text>
<text class="t" x="4.0" y="293.0" font-size="15.0" fill="#ffffff" stroke="#ffffff" stroke-width="0.4" textLength="94.5" lengthAdjust="spacingAndGlyphs">Dew Pt Depr.</text>
<text class="t" x="5.7" y="325.0" font-size="15.0" fill="#ffffff" stroke="#ffffff" stroke-width="0.4" textLength="97.8" lengthAdjust="spacingAndGlyphs">Indoor Temp.</text>
<text class="t" x="5.7" y="352.6" font-size="15.0" fill="#ffffff" stroke="#ffffff" stroke-width="0.4" textLength="91.8" lengthAdjust="spacingAndGlyphs">Indoor Hum.</text>
<text class="t" x="236.9" y="291.3" font-size="15.0" fill="#ffffff" stroke="#ffffff" stroke-width="0.4" textLength="70.4" lengthAdjust="spacingAndGlyphs">Wind chill</text>
<text class="t" x="236.9" y="321.8" font-size="15.0" fill="#ffffff" stroke="#ffffff" stroke-width="0.4" textLength="74.1" lengthAdjust="spacingAndGlyphs">Dew Point</text>
<text class="t" x="238.4" y="352.1" font-size="15.0" fill="#ffffff" stroke="#ffffff" stroke-width="0.4" textLength="65.6" lengthAdjust="spacingAndGlyphs">Wet Bulb</text>
<text class="t" x="4.0" y="407.7" font-size="15.4" fill="#ffffff" stroke="#ffffff" stroke-width="0.4" textLength="156.9" lengthAdjust="spacingAndGlyphs">Maximum Gust Today</text>
<text class="t" x="4.0" y="443.6" font-size="15.4" fill="#ffffff" stroke="#ffffff" stroke-width="0.4" textLength="184.0" lengthAdjust="spacingAndGlyphs">Maximum Gust Last Hour</text>
<text class="t" x="4.0" y="479.3" font-size="15.4" fill="#ffffff" stroke="#ffffff" stroke-width="0.4" textLength="134.5" lengthAdjust="spacingAndGlyphs">Maximum Average</text>
<text class="t" x="4.0" y="515.5" font-size="15.4" fill="#ffffff" stroke="#ffffff" stroke-width="0.4" textLength="167.5" lengthAdjust="spacingAndGlyphs">Maximum Temperature</text>
<text class="t" x="4.0" y="551.3" font-size="15.4" fill="#ffffff" stroke="#ffffff" stroke-width="0.4" textLength="164.2" lengthAdjust="spacingAndGlyphs">Minimum Temperature</text>
<text class="t" x="14.4" y="572.8" font-size="15.4" fill="#ffffff" stroke="#ffffff" stroke-width="0.4" textLength="70.5" lengthAdjust="spacingAndGlyphs">Maximum</text>
<text class="t" x="14.4" y="590.0" font-size="15.4" fill="#ffffff" stroke="#ffffff" stroke-width="0.4" textLength="70.5" lengthAdjust="spacingAndGlyphs">Rain Rate</text>
<text class="t" x="4.4" y="644.0" font-size="15.4" fill="#ffffff" stroke="#ffffff" stroke-width="0.4" textLength="70.6" lengthAdjust="spacingAndGlyphs">Last Hour</text>
<text class="t" x="3.4" y="676.5" font-size="15.4" fill="#ffffff" stroke="#ffffff" stroke-width="0.4" textLength="42.6" lengthAdjust="spacingAndGlyphs">Today</text>
<text class="t" x="4.4" y="709.0" font-size="15.4" fill="#ffffff" stroke="#ffffff" stroke-width="0.4" textLength="70.6" lengthAdjust="spacingAndGlyphs">Yesterday</text>
<text class="t" x="4.4" y="742.3" font-size="15.4" fill="#ffffff" stroke="#ffffff" stroke-width="0.4" textLength="107.1" lengthAdjust="spacingAndGlyphs">Month To Date</text>
<text class="t" x="4.4" y="775.8" font-size="15.4" fill="#ffffff" stroke="#ffffff" stroke-width="0.4" textLength="93.6" lengthAdjust="spacingAndGlyphs">Year To Date</text>
<text class="t" x="5.7" y="796.5" font-size="15.4" fill="#ffffff" stroke="#ffffff" stroke-width="0.4" textLength="70.6" lengthAdjust="spacingAndGlyphs">Rain Rate</text>
<text class="t" x="121.0" y="70.7" font-size="20.3" fill="#00ff00" stroke="#00ff00" stroke-width="0.35" textLength="72.3" lengthAdjust="spacingAndGlyphs">0.0 mph</text>
<text class="t" x="121.0" y="101.5" font-size="20.3" fill="#00ff00" stroke="#00ff00" stroke-width="0.35" textLength="72.3" lengthAdjust="spacingAndGlyphs">0.0 mph</text>
<text class="t" x="121.0" y="133.9" font-size="20.3" fill="#00ffff" stroke="#00ffff" stroke-width="0.35" textLength="69.1" lengthAdjust="spacingAndGlyphs">39.9 °F</text>
<text class="t" x="112.0" y="164.1" font-size="20.3" fill="#00ff00" stroke="#00ff00" stroke-width="0.35" textLength="92.1" lengthAdjust="spacingAndGlyphs">-0.2 °F /hr</text>
<text class="t" x="112.0" y="196.1" font-size="20.3" fill="#00ff00" stroke="#00ff00" stroke-width="0.35" textLength="86.5" lengthAdjust="spacingAndGlyphs">30.182 in.</text>
<text class="t" x="117.8" y="260.6" font-size="20.3" fill="#00ff00" stroke="#00ff00" stroke-width="0.35" textLength="47.0" lengthAdjust="spacingAndGlyphs">64 %</text>
<text class="t" x="118.0" y="292.4" font-size="20.3" fill="#00ff00" stroke="#00ff00" stroke-width="0.35" textLength="64.8" lengthAdjust="spacingAndGlyphs">11.2 °F</text>
<text class="t" x="118.0" y="323.1" font-size="20.3" fill="#00ff00" stroke="#00ff00" stroke-width="0.35" textLength="64.8" lengthAdjust="spacingAndGlyphs">49.0 °F</text>
<text class="t" x="118.0" y="353.5" font-size="20.3" fill="#00ff00" stroke="#00ff00" stroke-width="0.35" textLength="46.8" lengthAdjust="spacingAndGlyphs">39 %</text>
<text class="t" x="259.8" y="262.8" font-size="20.3" fill="#00ff00" stroke="#00ff00" stroke-width="0.35" textLength="30.5" lengthAdjust="spacingAndGlyphs">0.0</text>
<text class="t" x="366.7" y="291.1" font-size="20.3" fill="#00ff00" stroke="#00ff00" stroke-width="0.35" textLength="64.6" lengthAdjust="spacingAndGlyphs">39.9 °F</text>
<text class="t" x="366.7" y="322.1" font-size="20.3" fill="#00ff00" stroke="#00ff00" stroke-width="0.35" textLength="64.6" lengthAdjust="spacingAndGlyphs">28.7 °F</text>
<text class="t" x="366.7" y="353.1" font-size="20.3" fill="#00ff00" stroke="#00ff00" stroke-width="0.35" textLength="64.6" lengthAdjust="spacingAndGlyphs">35.9 °F</text>
<text class="t" x="388.4" y="244.3" font-size="20.3" fill="#00ff00" stroke="#00ff00" stroke-width="0.35" textLength="77.8" lengthAdjust="spacingAndGlyphs">W  280 °</text>
<text class="t" x="258.5" y="407.9" font-size="20.3" fill="#00ffff" stroke="#00ffff" stroke-width="0.35" textLength="124.3" lengthAdjust="spacingAndGlyphs">0.0 mph WSW</text>
<text class="t" x="258.5" y="443.9" font-size="20.3" fill="#00ff00" stroke="#00ff00" stroke-width="0.35" textLength="97.8" lengthAdjust="spacingAndGlyphs">0.0 mph  N</text>
<text class="t" x="258.5" y="479.6" font-size="20.3" fill="#00ff00" stroke="#00ff00" stroke-width="0.35" textLength="108.3" lengthAdjust="spacingAndGlyphs">0.0 mph   W</text>
<text class="t" x="258.5" y="521.1" font-size="20.3" fill="#00ffff" stroke="#00ffff" stroke-width="0.35" textLength="65.3" lengthAdjust="spacingAndGlyphs">40.9 °F</text>
<text class="t" x="258.5" y="554.1" font-size="20.3" fill="#00ff00" stroke="#00ff00" stroke-width="0.35" textLength="65.3" lengthAdjust="spacingAndGlyphs">39.6 °F</text>
<text class="t" x="135.9" y="586.3" font-size="20.3" fill="#00ff00" stroke="#00ff00" stroke-width="0.35" textLength="238.2" lengthAdjust="spacingAndGlyphs">0.000 in./min (0.000 in./hr)</text>
<text class="t" x="407.8" y="407.9" font-size="20.3" fill="#00ffff" stroke="#00ffff" stroke-width="0.35" textLength="71.1" lengthAdjust="spacingAndGlyphs">3:35 PM</text>
<text class="t" x="407.8" y="443.9" font-size="20.3" fill="#00ff00" stroke="#00ff00" stroke-width="0.35" textLength="71.6" lengthAdjust="spacingAndGlyphs">2:00 AM</text>
<text class="t" x="407.8" y="479.6" font-size="20.3" fill="#00ff00" stroke="#00ff00" stroke-width="0.35" textLength="71.1" lengthAdjust="spacingAndGlyphs">3:35 PM</text>
<text class="t" x="407.8" y="515.6" font-size="20.3" fill="#00ffff" stroke="#00ffff" stroke-width="0.35" textLength="82.6" lengthAdjust="spacingAndGlyphs">12:00 AM</text>
<text class="t" x="407.8" y="551.6" font-size="20.3" fill="#00ff00" stroke="#00ff00" stroke-width="0.35" textLength="71.1" lengthAdjust="spacingAndGlyphs">2:17 AM</text>
<text class="t" x="407.8" y="586.1" font-size="20.3" fill="#00ff00" stroke="#00ff00" stroke-width="0.35" textLength="82.6" lengthAdjust="spacingAndGlyphs">00:00 AM</text>
<text class="t" x="173.5" y="643.9" font-size="20.3" fill="#00ff00" stroke="#00ff00" stroke-width="0.35" textLength="65.3" lengthAdjust="spacingAndGlyphs">0.00 in.</text>
<text class="t" x="173.5" y="676.4" font-size="20.3" fill="#00ff00" stroke="#00ff00" stroke-width="0.35" textLength="65.3" lengthAdjust="spacingAndGlyphs">0.00 in.</text>
<text class="t" x="173.5" y="708.9" font-size="20.3" fill="#00ff00" stroke="#00ff00" stroke-width="0.35" textLength="65.3" lengthAdjust="spacingAndGlyphs">0.00 in.</text>
<text class="t" x="173.5" y="743.1" font-size="20.3" fill="#00ff00" stroke="#00ff00" stroke-width="0.35" textLength="65.3" lengthAdjust="spacingAndGlyphs">0.33 in.</text>
<text class="t" x="173.5" y="777.6" font-size="20.3" fill="#00ff00" stroke="#00ff00" stroke-width="0.35" textLength="65.3" lengthAdjust="spacingAndGlyphs">8.47 in.</text>
<text class="t" x="6.5" y="817.6" font-size="20.3" fill="#00ff00" stroke="#00ff00" stroke-width="0.35" textLength="238.8" lengthAdjust="spacingAndGlyphs">0.000 in./min (0.000 in./hr)</text>
<text class="t" x="109.3" y="227.1" font-size="16" fill="#00ff00" stroke="#00ff00" stroke-width="0.3" textLength="93.3" lengthAdjust="spacingAndGlyphs">+0.032in./hr</text>
<text class="t" x="10.8" y="381.2" font-size="15" fill="#ffff00" stroke="#ffff00" stroke-width="0.15" textLength="140.9" lengthAdjust="spacingAndGlyphs">Extreme Conditions</text>
<text class="t" x="416.0" y="382.6" font-size="15.2" fill="#ffff00" stroke="#ffff00" stroke-width="0.2" textLength="57.9" lengthAdjust="spacingAndGlyphs">At Time</text>
<text class="t" x="13.4" y="617.6" font-size="15.2" fill="#ffff00" stroke="#ffff00" stroke-width="0.35" textLength="56.2" lengthAdjust="spacingAndGlyphs">Rainfall</text>
<text class="a" x="204.6" y="379.6" font-size="13.4" fill="#ffffff" stroke="#ffffff" stroke-width="0.25" textLength="123.2" lengthAdjust="spacingAndGlyphs">Values reset at 0 hr</text>
<text class="a" x="131.0" y="615.1" font-size="13.4" fill="#ffffff" stroke="#ffffff" stroke-width="0.25" textLength="108.0" lengthAdjust="spacingAndGlyphs">Rain reset at 0 hr</text>
<text class="a" x="424.7" y="107.1" font-size="18" fill="#ffffff" stroke="#ffffff" stroke-width="0.15" textLength="13.0" lengthAdjust="spacingAndGlyphs">N</text>
<text class="a" x="369.2" y="121.5" font-size="18" fill="#ffffff" stroke="#ffffff" stroke-width="0.15" textLength="29.8" lengthAdjust="spacingAndGlyphs">NW</text>
<text class="a" x="463.5" y="122.5" font-size="18" fill="#ffffff" stroke="#ffffff" stroke-width="0.15" textLength="23.5" lengthAdjust="spacingAndGlyphs">NE</text>
<text class="a" x="359.2" y="166.7" font-size="18" fill="#ffffff" stroke="#ffffff" stroke-width="0.15" textLength="16.2" lengthAdjust="spacingAndGlyphs">W</text>
<text class="a" x="482.3" y="166.7" font-size="18" fill="#ffffff" stroke="#ffffff" stroke-width="0.15" textLength="10.0" lengthAdjust="spacingAndGlyphs">E</text>
<text class="a" x="367.0" y="211.3" font-size="18" fill="#ffffff" stroke="#ffffff" stroke-width="0.15" textLength="28.8" lengthAdjust="spacingAndGlyphs">SW</text>
<text class="a" x="464.4" y="211.3" font-size="18" fill="#ffffff" stroke="#ffffff" stroke-width="0.15" textLength="22.6" lengthAdjust="spacingAndGlyphs">SE</text>
<text class="a" x="425.4" y="229.6" font-size="18" fill="#ffffff" stroke="#ffffff" stroke-width="0.15" textLength="10.8" lengthAdjust="spacingAndGlyphs">S</text>
<text class="a" x="332.7" y="754.3" font-size="18" fill="#00ff00" stroke="#00ff00" stroke-width="0.3" textLength="83.3" lengthAdjust="spacingAndGlyphs">4/3/2026</text>
<text class="a" x="332.7" y="778.3" font-size="18" fill="#00ff00" stroke="#00ff00" stroke-width="0.3" textLength="106.0" lengthAdjust="spacingAndGlyphs">2:50:00 AM</text>
<text class="a" x="318.6" y="799.5" font-size="13" fill="#ffffff" stroke="#ffffff" stroke-width="0.15" textLength="89.9" lengthAdjust="spacingAndGlyphs">Data Received</text>
<text class="a" x="425.0" y="799.5" font-size="13" fill="#ffffff" stroke="#ffffff" stroke-width="0.15" textLength="50.5" lengthAdjust="spacingAndGlyphs">3008691</text>
<text class="a" x="462.8" y="833.4" font-size="12" fill="#ffffff" stroke="#ffffff" stroke-width="0.15" textLength="31.6" lengthAdjust="spacingAndGlyphs">Alarm</text>
</g>
</svg></div></body></html>
